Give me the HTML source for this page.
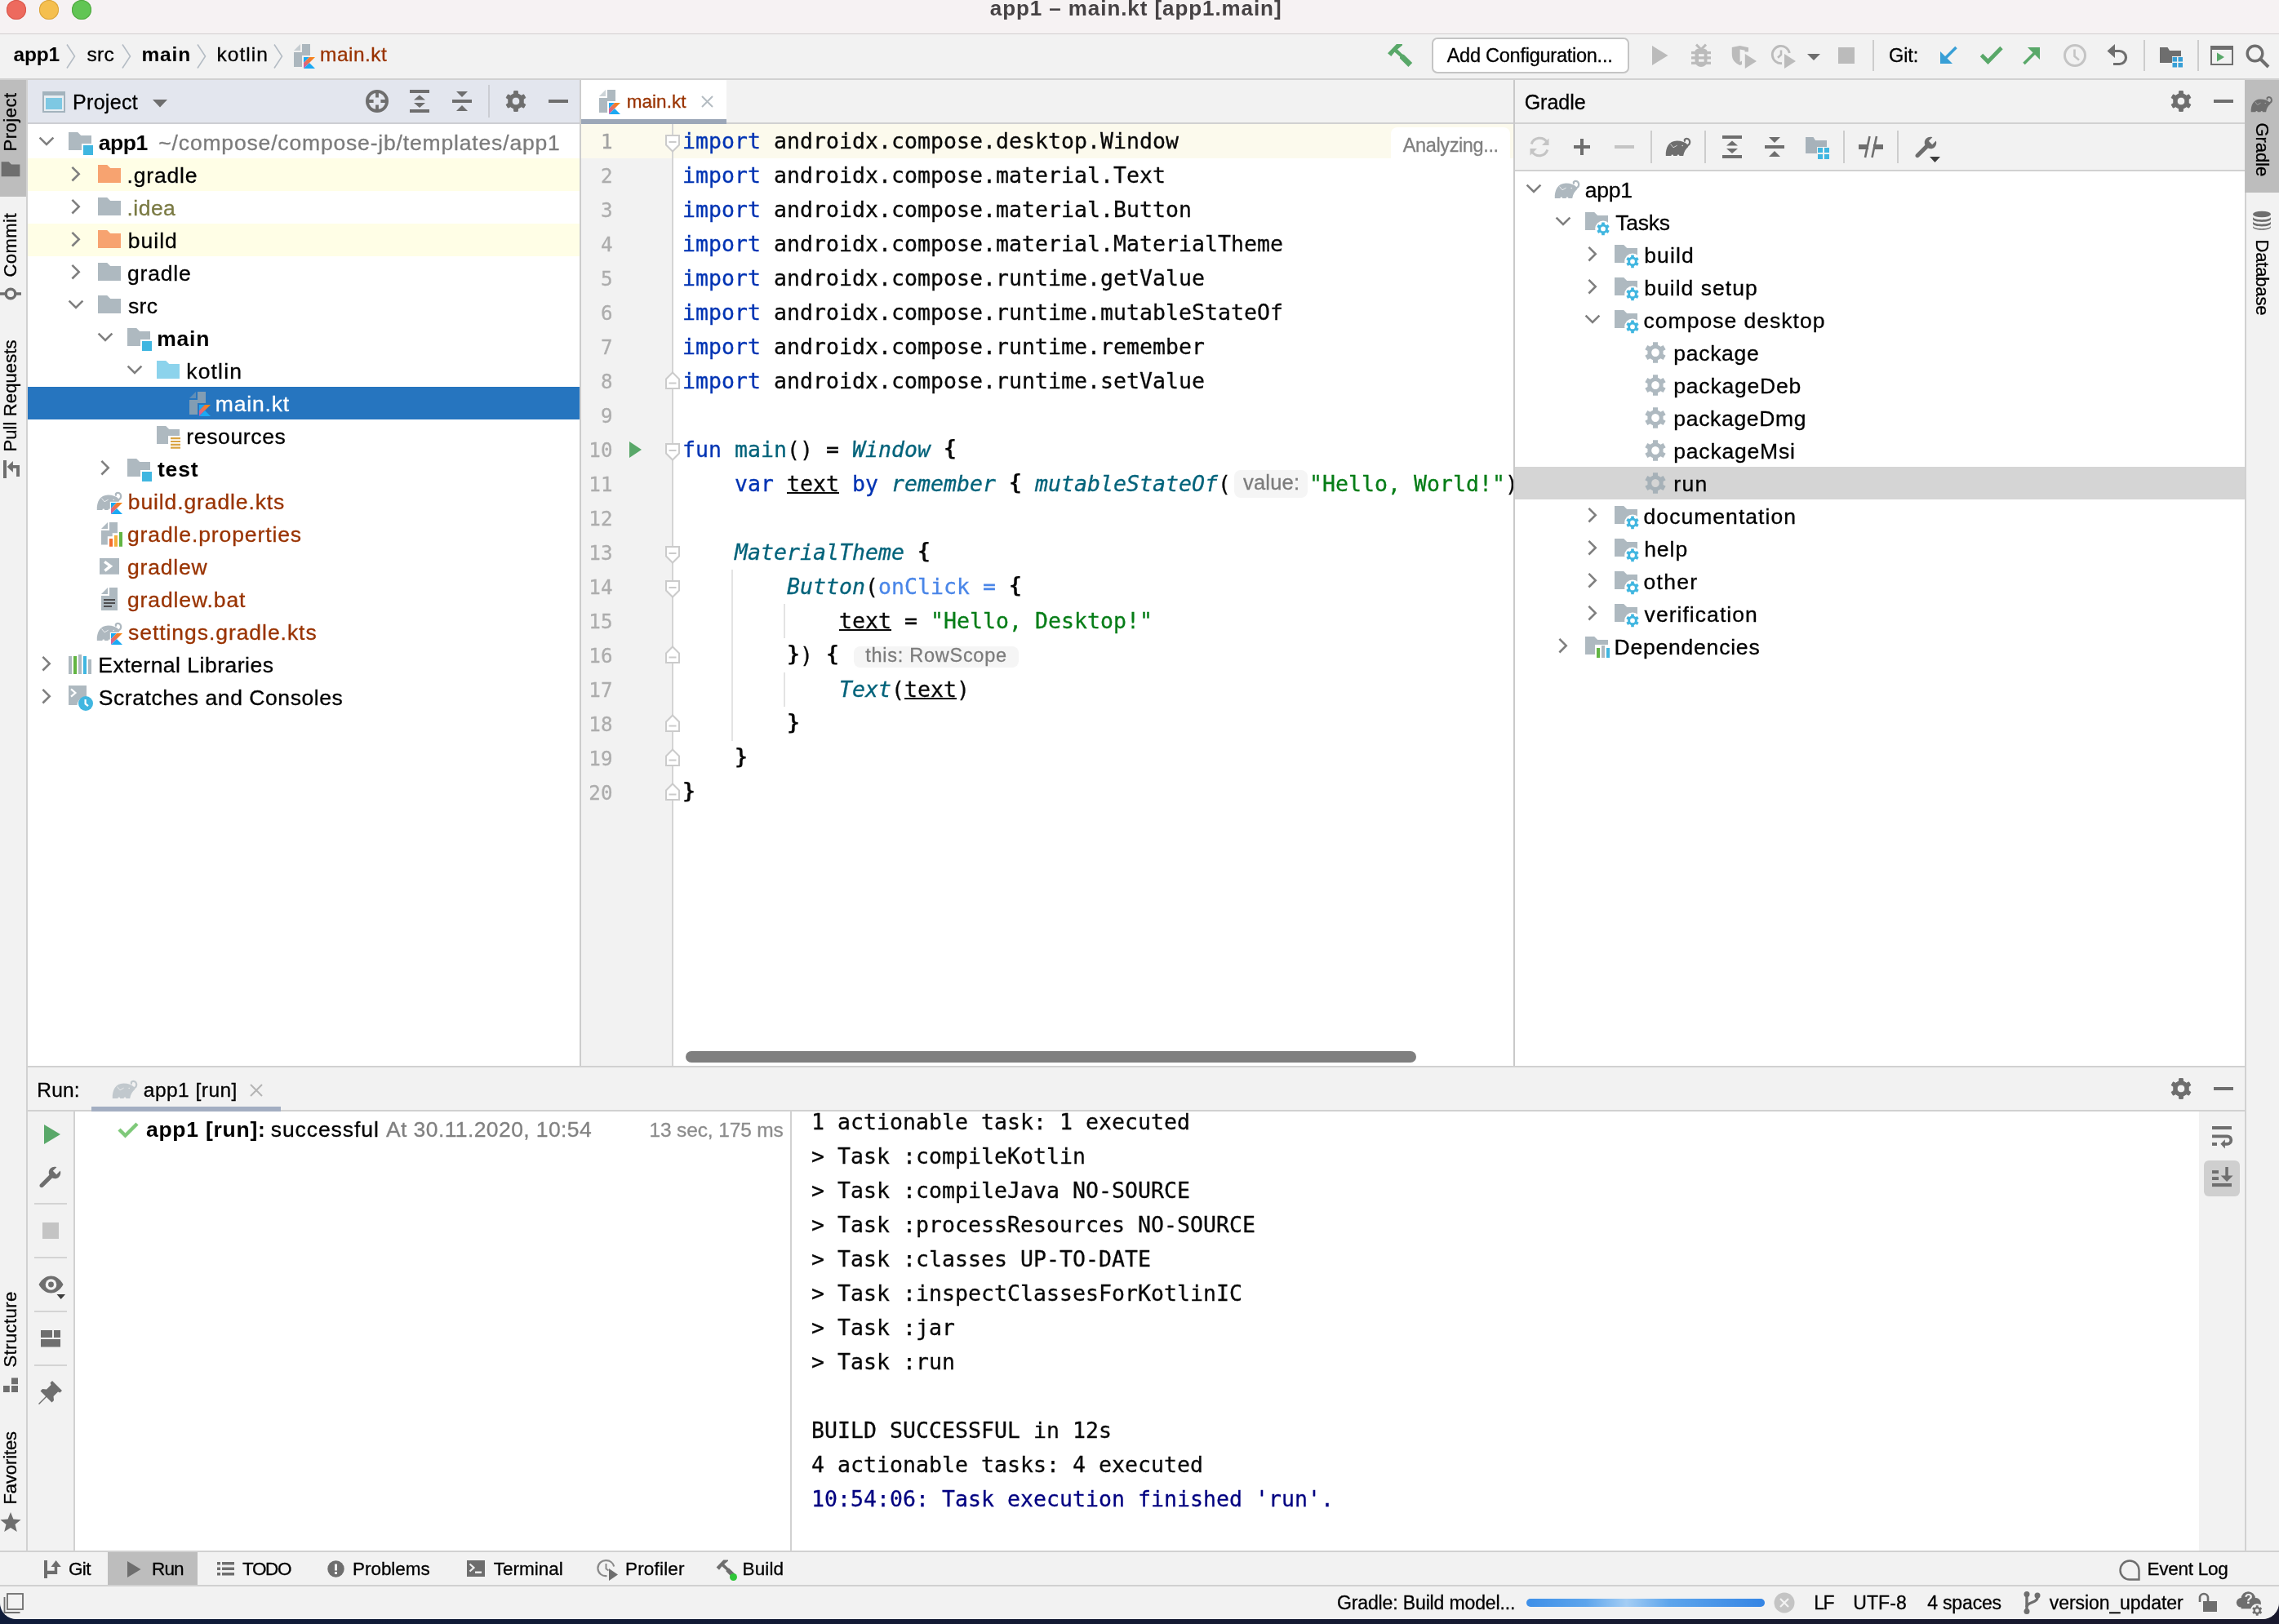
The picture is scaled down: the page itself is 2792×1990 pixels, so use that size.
<!DOCTYPE html>
<html lang="en"><head><meta charset="utf-8"><title>app1 – main.kt [app1.main]</title><style>
html,body{margin:0;padding:0;}
body{width:2792px;height:1990px;overflow:hidden;background:#131c33;position:relative;}
#root{position:absolute;left:0;top:0;width:2792px;height:1990px;overflow:hidden;will-change:transform;}
#root div,#root svg,#root span.t{position:absolute;}
span.t{white-space:pre;line-height:0;display:block;-webkit-text-stroke:0.3px;}
svg{overflow:visible;}
</style></head><body><div id="root">
<div style="left:0px;top:0px;width:2792px;height:1990px;background:#131c33;background:linear-gradient(90deg,#0f1c3a 0%,#141a33 50%,#19192d 100%);"></div>
<div class="win" style="left:0px;top:0px;width:2792px;height:1984px;background:#f2f2f2;border-radius:0 0 20px 20px;overflow:hidden;">
</div>
<div style="left:0px;top:0px;width:2792px;height:41px;background:#f6f2f3;"></div>
<div style="left:0px;top:41px;width:2792px;height:1px;background:#d2cfd0;"></div>
<div style="left:8px;top:0px;width:24px;height:24px;background:#ed6a5e;border-radius:12px;box-shadow:inset 0 0 0 1px #d8574c;"></div>
<div style="left:48px;top:0px;width:24px;height:24px;background:#f5bf4f;border-radius:12px;box-shadow:inset 0 0 0 1px #d9a33c;"></div>
<div style="left:88px;top:0px;width:24px;height:24px;background:#61c554;border-radius:12px;box-shadow:inset 0 0 0 1px #4fa73f;"></div>
<span id="t1" class="t" style="left:1212.80px;top:10.00px;font-family:'Liberation Sans', Arial, sans-serif;font-size:26px;color:#464244;letter-spacing:0.920px;font-weight:700;-webkit-text-stroke:0;">app1 – main.kt [app1.main]</span>
<div style="left:0px;top:42px;width:2792px;height:54px;background:#f2f2f2;"></div>
<div style="left:0px;top:96px;width:2792px;height:2px;background:#d1d1d1;"></div>
<span id="t2" class="t" style="left:16.50px;top:66.50px;font-family:'Liberation Sans', Arial, sans-serif;font-size:24.5px;color:#000;letter-spacing:-0.186px;font-weight:700;-webkit-text-stroke:0;">app1</span>
<svg style="left:81px;top:54px;" width="12" height="30" viewBox="0 0 12 30"><path d="M1 0.5L10.5 15L1 29.5" stroke="#b4bcc4" stroke-width="1.6" fill="none"/></svg>
<span id="t3" class="t" style="left:106.40px;top:66.50px;font-family:'Liberation Sans', Arial, sans-serif;font-size:24.5px;color:#000;letter-spacing:0.396px;">src</span>
<svg style="left:149px;top:54px;" width="12" height="30" viewBox="0 0 12 30"><path d="M1 0.5L10.5 15L1 29.5" stroke="#b4bcc4" stroke-width="1.6" fill="none"/></svg>
<span id="t4" class="t" style="left:173.40px;top:66.50px;font-family:'Liberation Sans', Arial, sans-serif;font-size:24.5px;color:#000;letter-spacing:0.861px;font-weight:700;-webkit-text-stroke:0;">main</span>
<svg style="left:241px;top:54px;" width="12" height="30" viewBox="0 0 12 30"><path d="M1 0.5L10.5 15L1 29.5" stroke="#b4bcc4" stroke-width="1.6" fill="none"/></svg>
<span id="t5" class="t" style="left:265.60px;top:66.50px;font-family:'Liberation Sans', Arial, sans-serif;font-size:24.5px;color:#000;letter-spacing:1.026px;">kotlin</span>
<svg style="left:335px;top:54px;" width="12" height="30" viewBox="0 0 12 30"><path d="M1 0.5L10.5 15L1 29.5" stroke="#b4bcc4" stroke-width="1.6" fill="none"/></svg>
<svg style="left:356px;top:52px;" width="32" height="32" viewBox="0 0 16 16"><path d="M6 1L2 5H6Z" fill="#9aa7b0" fill-opacity=".5"/><path d="M7 1H12V8H7V15H2V6H7Z" fill="#9aa7b0" fill-opacity=".8"/><defs><linearGradient id="kg1" x1="1" y1="0" x2="0" y2="1"><stop offset="0" stop-color="#f88909"/><stop offset=".4" stop-color="#f2783b"/><stop offset="1" stop-color="#c757bc"/></linearGradient></defs><path d="M8 9H11.5L8 12.5Z" fill="#1ba9f3"/><path d="M11.5 9H15L8 16V12.5Z" fill="url(#kg1)"/><path d="M8 16L11.5 12.5L15 16Z" fill="#1ba9f3"/></svg>
<span id="t6" class="t" style="left:392.00px;top:66.50px;font-family:'Liberation Sans', Arial, sans-serif;font-size:24.5px;color:#993300;letter-spacing:0.473px;">main.kt</span>
<svg style="left:1698px;top:52px;" width="34" height="32" viewBox="0 0 34 32"><path d="M2 13.2L12.9 2H20V3.5L14 8.5L19.9 14.2L22 15.1L32.2 25.100L27.400 30L16.900 19.400L17.200 17.500L10.500 11.700L6.300 17.100Z" fill="#59a869"/></svg>
<div style="left:1754px;top:46px;width:242px;height:44px;background:#fff;border:2px solid #c4c4c4;border-radius:7px;box-sizing:border-box;"></div>
<span id="t7" class="t" style="left:1772.70px;top:68.00px;font-family:'Liberation Sans', Arial, sans-serif;font-size:23.5px;color:#000;letter-spacing:-0.247px;">Add Configuration...</span>
<svg style="left:2024px;top:56px;" width="20" height="24" viewBox="0 0 20 24"><path d="M0 0L19.500 12L0 24Z" fill="#bbbbbb"/></svg>
<svg style="left:2068px;top:52px;" width="32" height="32" viewBox="0 0 32 32"><g fill="#bbbbbb"><path d="M8.500 11C8.500 8.300 12 7.600 16 7.600S23.500 8.300 23.500 11V22C23.500 27 20 30 16 30S8.500 27 8.500 22Z"/><rect x="4" y="11" width="24" height="3.200"/><rect x="4" y="17.200" width="24" height="3.300"/><rect x="4" y="23.700" width="24" height="3.200"/></g><path d="M10 2.600L16 8.600L22 2.600" stroke="#bbbbbb" stroke-width="3" fill="none"/><rect x="13" y="14.200" width="6.600" height="3" fill="#f2f2f2"/><rect x="13" y="20.500" width="6.600" height="3.200" fill="#f2f2f2"/></svg>
<svg style="left:2119px;top:52px;" width="34" height="34" viewBox="0 0 34 34"><path d="M2.800 6L12.600 4L23 6.300V11.600H18.600V9.800L12.600 8.600V24L15 22.500V27L12.600 28C6 25 2.800 21 2.800 14Z" fill="#bbbbbb"/><path d="M18.800 14L33 23L18.800 32Z" fill="#bbbbbb"/></svg>
<svg style="left:2168px;top:52px;" width="34" height="34" viewBox="0 0 34 34"><path d="M24.300 13A10.600 10.600 0 1 0 15 25.500" stroke="#bbbbbb" stroke-width="2.800" fill="none"/><path d="M14 9.500V15L10 18.800" stroke="#bbbbbb" stroke-width="2.600" fill="none"/><path d="M18 14L32 23L18 32Z" fill="#bbbbbb"/></svg>
<svg style="left:2214px;top:66px;" width="16" height="8" viewBox="0 0 16 8"><path d="M0 0H16L8 8Z" fill="#6e6e6e"/></svg>
<div style="left:2252px;top:58px;width:20px;height:20px;background:#bbbbbb;"></div>
<div style="left:2294px;top:49px;width:2px;height:38px;background:#cdcdcd;"></div>
<span id="t8" class="t" style="left:2314.00px;top:68.00px;font-family:'Liberation Sans', Arial, sans-serif;font-size:23.5px;color:#000;letter-spacing:-0.110px;">Git:</span>
<svg style="left:2374px;top:55px;" width="26" height="26" viewBox="0 0 26 26"><path d="M22.5 3L5.5 20" stroke="#389fd6" stroke-width="3.6" fill="none"/><path d="M3 8V23H18Z" fill="#389fd6"/></svg>
<svg style="left:2424px;top:54px;" width="32" height="28" viewBox="0 0 32 28"><path d="M3.500 13.500L11.500 21.500L28 4.500" stroke="#59a869" stroke-width="4.800" fill="none"/></svg>
<svg style="left:2476px;top:55px;" width="26" height="26" viewBox="0 0 26 26"><path d="M3.5 23L20.5 6" stroke="#59a869" stroke-width="3.6" fill="none"/><path d="M8 3H23V18Z" fill="#59a869"/></svg>
<svg style="left:2526px;top:52px;" width="32" height="32" viewBox="0 0 32 32"><circle cx="16" cy="16" r="12.5" stroke="#c4c4c4" stroke-width="3" fill="none"/><path d="M15.5 8.5V17L21 21.5" stroke="#c4c4c4" stroke-width="2.6" fill="none"/></svg>
<svg style="left:2580px;top:53px;" width="30" height="28" viewBox="0 0 30 28"><path d="M3 9.5H16.5A8 8 0 0 1 16.5 25.5H9" stroke="#6e6e6e" stroke-width="3.2" fill="none"/><path d="M11 1V18L1.5 9.5Z" fill="#6e6e6e"/></svg>
<div style="left:2626px;top:49px;width:2px;height:38px;background:#cdcdcd;"></div>
<svg style="left:2644px;top:54px;" width="32" height="30" viewBox="0 0 32 30"><path d="M2 4H11.5L14 8H28V15H17V23H2Z" fill="#6e6e6e"/><rect x="17.5" y="16" width="5.5" height="5.5" fill="#389fd6"/><rect x="24.5" y="16" width="5.5" height="5.5" fill="#389fd6"/><rect x="17.5" y="23" width="5.5" height="5.5" fill="#389fd6"/><rect x="24.5" y="23" width="5.5" height="5.5" fill="#389fd6"/></svg>
<div style="left:2692px;top:49px;width:2px;height:38px;background:#cdcdcd;"></div>
<svg style="left:2708px;top:56px;" width="28" height="24" viewBox="0 0 28 24"><rect x="1" y="3" width="26" height="20" stroke="#6e6e6e" stroke-width="2" fill="none"/><rect x="0" y="0" width="28" height="5" fill="#6e6e6e"/><path d="M8 8.5L17 14L8 19.5Z" fill="#59a869"/></svg>
<svg style="left:2750px;top:53px;" width="32" height="32" viewBox="0 0 32 32"><circle cx="12.5" cy="12.5" r="9.3" stroke="#6e6e6e" stroke-width="3.4" fill="none"/><path d="M19 19L29 29" stroke="#6e6e6e" stroke-width="4" fill="none"/></svg>
<div style="left:0px;top:98px;width:32px;height:1804px;background:#f2f2f2;"></div>
<div style="left:32px;top:98px;width:2px;height:1804px;background:#d1d1d1;"></div>
<div style="left:0px;top:98px;width:32px;height:143px;background:#bdbdbd;"></div>
<span id="t9" class="t" style="left:19.20px;top:177.00px;font-family:'Liberation Sans', Arial, sans-serif;font-size:22px;color:#000;letter-spacing:0.524px;transform-origin:1.00px 7.50px;transform:rotate(-90deg);">Project</span>
<svg style="left:0px;top:194.6px;" width="26" height="26" viewBox="0 0 16 16"><path d="M1 2H6.6L8.6 4H15V13H1Z" fill="#6e6e6e" fill-opacity="1"/></svg>
<span id="t10" class="t" style="left:19.20px;top:330.70px;font-family:'Liberation Sans', Arial, sans-serif;font-size:22px;color:#000;letter-spacing:0.447px;transform-origin:1.00px 7.50px;transform:rotate(-90deg);">Commit</span>
<svg style="left:0px;top:346.6px;" width="26" height="26" viewBox="0 0 26 26"><circle cx="13" cy="13" r="5.800" stroke="#6e6e6e" stroke-width="3.400" fill="none"/><path d="M0 13H7.500M18.500 13H26" stroke="#6e6e6e" stroke-width="3.400"/></svg>
<span id="t11" class="t" style="left:19.00px;top:545.10px;font-family:'Liberation Sans', Arial, sans-serif;font-size:22px;color:#000;letter-spacing:0.105px;transform-origin:1.00px 7.50px;transform:rotate(-90deg);">Pull Requests</span>
<svg style="left:0px;top:560px;" width="28" height="28" viewBox="0 0 28 28"><rect x="4" y="4" width="4" height="22" fill="#6e6e6e"/><path d="M8.700 12L15.900 5.100V10.100H24V24H20.100V13.800H15.900V18.800Z" fill="#6e6e6e"/></svg>
<span id="t12" class="t" style="left:19.20px;top:1666.60px;font-family:'Liberation Sans', Arial, sans-serif;font-size:22px;color:#000;letter-spacing:0.435px;transform-origin:1.00px 7.50px;transform:rotate(-90deg);">Structure</span>
<svg style="left:0px;top:1684px;" width="26" height="26" viewBox="0 0 26 26"><rect x="14" y="4.400" width="8" height="7.800" fill="#6e6e6e"/><rect x="4" y="14" width="7.800" height="8" fill="#6e6e6e"/><rect x="14" y="14" width="8" height="8" fill="#6e6e6e"/></svg>
<span id="t13" class="t" style="left:19.20px;top:1835.00px;font-family:'Liberation Sans', Arial, sans-serif;font-size:22px;color:#000;letter-spacing:-0.121px;transform-origin:1.00px 7.50px;transform:rotate(-90deg);">Favorites</span>
<svg style="left:0px;top:1852px;" width="26" height="26" viewBox="0 0 26 26"><path d="M13 1L16.400 9.600L25.600 10.200L18.500 16.100L20.800 25L13 20.100L5.200 25L7.500 16.100L0.400 10.200L9.600 9.600Z" fill="#6e6e6e"/></svg>
<div style="left:34px;top:98px;width:676px;height:52px;background:#e3e6ee;"></div>
<div style="left:34px;top:150px;width:676px;height:2px;background:#cdced3;"></div>
<div style="left:34px;top:152px;width:676px;height:1154px;background:#fff;"></div>
<div style="left:710px;top:98px;width:2px;height:1208px;background:#cdcdcd;"></div>
<svg style="left:52px;top:112px;" width="28" height="26" viewBox="0 0 28 26"><rect x="0" y="0" width="28" height="26" fill="#a3b3bd"/><rect x="2" y="5" width="24" height="19" fill="#e8eef2"/><rect x="4" y="8" width="20" height="14" fill="#7ec8e3"/></svg>
<span id="t14" class="t" style="left:89.10px;top:125.00px;font-family:'Liberation Sans', Arial, sans-serif;font-size:25px;color:#000;letter-spacing:0.290px;">Project</span>
<svg style="left:187px;top:122px;" width="18" height="10" viewBox="0 0 18 10"><path d="M0 0H18L9 9.5Z" fill="#6e6e6e"/></svg>
<svg style="left:446px;top:108px;" width="32" height="32" viewBox="0 0 16 16"><circle cx="8" cy="8" r="6.05" stroke="#6e6e6e" stroke-width="1.9" fill="none"/><path d="M8 1.5V5.8M8 10.2V14.5M1.5 8H5.8M10.2 8H14.5" stroke="#6e6e6e" stroke-width="1.9" fill="none"/></svg>
<svg style="left:498px;top:108px;" width="32" height="32" viewBox="0 0 16 16"><rect x="2" y="1" width="12" height="2" fill="#6e6e6e"/><rect x="2" y="13" width="12" height="2" fill="#6e6e6e"/><path d="M8 4.2L11.5 7.2H4.5Z" fill="#6e6e6e"/><path d="M8 12L11.5 9H4.5Z" fill="#6e6e6e"/></svg>
<svg style="left:550px;top:108px;" width="32" height="32" viewBox="0 0 16 16"><rect x="2" y="7" width="12" height="2" fill="#6e6e6e"/><path d="M8 5.5L11.5 2H4.5Z" fill="#6e6e6e"/><path d="M8 10.5L11.5 14H4.5Z" fill="#6e6e6e"/></svg>
<div style="left:598px;top:104px;width:2px;height:40px;background:#cbcdd3;"></div>
<svg style="left:616px;top:108px;" width="32" height="32" viewBox="0 0 16 16"><path d="M6.88 1.80L9.12 1.80L9.28 3.42L11.32 4.61L12.81 3.93L13.93 5.87L12.60 6.82L12.60 9.18L13.93 10.13L12.81 12.07L11.32 11.39L9.28 12.58L9.12 14.20L6.88 14.20L6.72 12.58L4.68 11.39L3.19 12.07L2.07 10.13L3.40 9.18L3.40 6.82L2.07 5.87L3.19 3.93L4.68 4.61L6.72 3.42ZM5.55 8a2.45 2.45 0 1 0 4.9 0a2.45 2.45 0 1 0 -4.9 0Z" fill="#6e6e6e" fill-rule="evenodd" stroke="#6e6e6e" stroke-width=".5" stroke-linejoin="round"/></svg>
<svg style="left:668px;top:108px;" width="32" height="32" viewBox="0 0 16 16"><rect x="2" y="7" width="12" height="2" fill="#6e6e6e"/></svg>
<svg style="left:41px;top:158px;" width="32" height="32" viewBox="0 0 16 16"><path d="M3.8 5.3L8 9.5L12.2 5.3" stroke="#7f7f7f" stroke-width="1.3" fill="none"/></svg>
<svg style="left:82px;top:158px;" width="32" height="32" viewBox="0 0 16 16"><path d="M1 2H6.6L8.6 4H15V9H9V13H1Z" fill="#9aa7b0" fill-opacity=".8"/><rect x="10" y="10" width="6" height="6" fill="#40b6e0"/></svg>
<span id="t15" class="t" style="left:120.80px;top:175.00px;font-family:'Liberation Sans', Arial, sans-serif;font-size:26.5px;color:#000;letter-spacing:-0.471px;font-weight:700;-webkit-text-stroke:0;">app1</span>
<span id="t16" class="t" style="left:194.30px;top:175.00px;font-family:'Liberation Sans', Arial, sans-serif;font-size:26.5px;color:#7b7b7b;letter-spacing:0.831px;">~/compose/compose-jb/templates/app1</span>
<div style="left:34px;top:194px;width:676px;height:40px;background:#fffee6;"></div>
<svg style="left:77px;top:198px;" width="32" height="32" viewBox="0 0 16 16"><path d="M5.7 3.45L9.85 7.6L5.7 11.75" stroke="#7f7f7f" stroke-width="1.3" fill="none"/></svg>
<svg style="left:118px;top:198px;" width="32" height="32" viewBox="0 0 16 16"><path d="M1 2H6.6L8.6 4H15V13H1Z" fill="#f26522" fill-opacity="0.6"/></svg>
<span id="t17" class="t" style="left:155.50px;top:215.00px;font-family:'Liberation Sans', Arial, sans-serif;font-size:26.5px;color:#000;letter-spacing:0.819px;">.gradle</span>
<svg style="left:77px;top:238px;" width="32" height="32" viewBox="0 0 16 16"><path d="M5.7 3.45L9.85 7.6L5.7 11.75" stroke="#7f7f7f" stroke-width="1.3" fill="none"/></svg>
<svg style="left:118px;top:238px;" width="32" height="32" viewBox="0 0 16 16"><path d="M1 2H6.6L8.6 4H15V13H1Z" fill="#9aa7b0" fill-opacity="0.8"/></svg>
<span id="t18" class="t" style="left:155.50px;top:255.00px;font-family:'Liberation Sans', Arial, sans-serif;font-size:26.5px;color:#7a7a43;letter-spacing:0.468px;">.idea</span>
<div style="left:34px;top:274px;width:676px;height:40px;background:#fffee6;"></div>
<svg style="left:77px;top:278px;" width="32" height="32" viewBox="0 0 16 16"><path d="M5.7 3.45L9.85 7.6L5.7 11.75" stroke="#7f7f7f" stroke-width="1.3" fill="none"/></svg>
<svg style="left:118px;top:278px;" width="32" height="32" viewBox="0 0 16 16"><path d="M1 2H6.6L8.6 4H15V13H1Z" fill="#f26522" fill-opacity="0.6"/></svg>
<span id="t19" class="t" style="left:156.80px;top:295.00px;font-family:'Liberation Sans', Arial, sans-serif;font-size:26.5px;color:#000;letter-spacing:1.012px;">build</span>
<svg style="left:77px;top:318px;" width="32" height="32" viewBox="0 0 16 16"><path d="M5.7 3.45L9.85 7.6L5.7 11.75" stroke="#7f7f7f" stroke-width="1.3" fill="none"/></svg>
<svg style="left:118px;top:318px;" width="32" height="32" viewBox="0 0 16 16"><path d="M1 2H6.6L8.6 4H15V13H1Z" fill="#9aa7b0" fill-opacity="0.8"/></svg>
<span id="t20" class="t" style="left:156.00px;top:335.00px;font-family:'Liberation Sans', Arial, sans-serif;font-size:26.5px;color:#000;letter-spacing:0.815px;">gradle</span>
<svg style="left:77px;top:358px;" width="32" height="32" viewBox="0 0 16 16"><path d="M3.8 5.3L8 9.5L12.2 5.3" stroke="#7f7f7f" stroke-width="1.3" fill="none"/></svg>
<svg style="left:118px;top:358px;" width="32" height="32" viewBox="0 0 16 16"><path d="M1 2H6.6L8.6 4H15V13H1Z" fill="#9aa7b0" fill-opacity="0.8"/></svg>
<span id="t21" class="t" style="left:157.00px;top:375.00px;font-family:'Liberation Sans', Arial, sans-serif;font-size:26.5px;color:#000;letter-spacing:0.313px;">src</span>
<svg style="left:113px;top:398px;" width="32" height="32" viewBox="0 0 16 16"><path d="M3.8 5.3L8 9.5L12.2 5.3" stroke="#7f7f7f" stroke-width="1.3" fill="none"/></svg>
<svg style="left:154px;top:398px;" width="32" height="32" viewBox="0 0 16 16"><path d="M1 2H6.6L8.6 4H15V9H9V13H1Z" fill="#9aa7b0" fill-opacity=".8"/><rect x="10" y="10" width="6" height="6" fill="#40b6e0"/></svg>
<span id="t22" class="t" style="left:192.20px;top:415.00px;font-family:'Liberation Sans', Arial, sans-serif;font-size:26.5px;color:#000;letter-spacing:0.779px;font-weight:700;-webkit-text-stroke:0;">main</span>
<svg style="left:149px;top:438px;" width="32" height="32" viewBox="0 0 16 16"><path d="M3.8 5.3L8 9.5L12.2 5.3" stroke="#7f7f7f" stroke-width="1.3" fill="none"/></svg>
<svg style="left:190px;top:438px;" width="32" height="32" viewBox="0 0 16 16"><path d="M1 2H6.6L8.6 4H15V13H1Z" fill="#40b6e0" fill-opacity="0.6"/></svg>
<span id="t23" class="t" style="left:228.30px;top:455.00px;font-family:'Liberation Sans', Arial, sans-serif;font-size:26.5px;color:#000;letter-spacing:1.155px;">kotlin</span>
<div style="left:34px;top:474px;width:676px;height:40px;background:#2675bf;"></div>
<svg style="left:228px;top:478px;" width="32" height="32" viewBox="0 0 16 16"><path d="M6 1L2 5H6Z" fill="#9aa7b0" fill-opacity=".5"/><path d="M7 1H12V8H7V15H2V6H7Z" fill="#9aa7b0" fill-opacity=".8"/><defs><linearGradient id="kg2" x1="1" y1="0" x2="0" y2="1"><stop offset="0" stop-color="#f88909"/><stop offset=".4" stop-color="#f2783b"/><stop offset="1" stop-color="#c757bc"/></linearGradient></defs><path d="M8 9H11.5L8 12.5Z" fill="#1ba9f3"/><path d="M11.5 9H15L8 16V12.5Z" fill="url(#kg2)"/><path d="M8 16L11.5 12.5L15 16Z" fill="#1ba9f3"/></svg>
<span id="t24" class="t" style="left:263.80px;top:495.00px;font-family:'Liberation Sans', Arial, sans-serif;font-size:26.5px;color:#fff;letter-spacing:0.808px;">main.kt</span>
<svg style="left:190px;top:518px;" width="32" height="32" viewBox="0 0 16 16"><path d="M1 2H6.6L8.6 4H15V8H8V13H1Z" fill="#9aa7b0" fill-opacity=".8"/><path d="M9.5 9.6h6M9.5 11.5h6M9.5 13.4h6M9.5 15.3h6" stroke="#d9a343" stroke-width="1.1" fill="none"/></svg>
<span id="t25" class="t" style="left:228.30px;top:535.00px;font-family:'Liberation Sans', Arial, sans-serif;font-size:26.5px;color:#000;letter-spacing:0.650px;">resources</span>
<svg style="left:113px;top:558px;" width="32" height="32" viewBox="0 0 16 16"><path d="M5.7 3.45L9.85 7.6L5.7 11.75" stroke="#7f7f7f" stroke-width="1.3" fill="none"/></svg>
<svg style="left:154px;top:558px;" width="32" height="32" viewBox="0 0 16 16"><path d="M1 2H6.6L8.6 4H15V9H9V13H1Z" fill="#9aa7b0" fill-opacity=".8"/><rect x="10" y="10" width="6" height="6" fill="#40b6e0"/></svg>
<span id="t26" class="t" style="left:193.00px;top:575.00px;font-family:'Liberation Sans', Arial, sans-serif;font-size:26.5px;color:#000;letter-spacing:0.800px;font-weight:700;-webkit-text-stroke:0;">test</span>
<svg style="left:118px;top:598px;" width="32" height="32" viewBox="0 0 16 16"><g opacity="0.8"><path d="M0.4 13.5C0.2 8.6 2.2 4.3 7.2 4.3C10 4.3 12.2 5.2 13.6 6.5L14.2 7.9C12.6 9.2 11.5 11 11.1 13.5H8.7A0.7 0.7 0 0 0 7.3 13.5H5.1A0.7 0.7 0 0 0 3.7 13.5Z" fill="#9aa7b0"/><path d="M13.1 7.3C14.6 6.9 15.25 5.8 15.05 4.6C14.8 3.2 13.4 2.6 12.4 3.15C11.95 3.4 11.8 3.9 11.95 4.35" stroke="#9aa7b0" stroke-width="1.15" stroke-linecap="round" fill="none"/></g><path d="M3.3 6.3L5 8.4L7.3 7.1" stroke="#fff" stroke-opacity=".85" stroke-width=".45" fill="none"/><circle cx="10.6" cy="7.2" r=".38" fill="#fff" fill-opacity=".85"/><rect x="8.4" y="8.4" width="8" height="8" fill="#fff"/><defs><linearGradient id="kg3" x1="1" y1="0" x2="0" y2="1"><stop offset="0" stop-color="#f88909"/><stop offset=".4" stop-color="#f2783b"/><stop offset="1" stop-color="#c757bc"/></linearGradient></defs><path d="M9 9H12.5L9 12.5Z" fill="#1ba9f3"/><path d="M12.5 9H16L9 16V12.5Z" fill="url(#kg3)"/><path d="M9 16L12.5 12.5L16 16Z" fill="#1ba9f3"/></svg>
<span id="t27" class="t" style="left:156.80px;top:615.00px;font-family:'Liberation Sans', Arial, sans-serif;font-size:26.5px;color:#993300;letter-spacing:0.881px;">build.gradle.kts</span>
<svg style="left:118px;top:638px;" width="32" height="32" viewBox="0 0 16 16"><path d="M7 1L3 5H7Z" fill="#9aa7b0" fill-opacity=".8"/><path d="M8 1H13V7.6H9.85V9.65H6.9V14.8H3V6H8Z" fill="#9aa7b0" fill-opacity=".8"/><rect x="8" y="11" width="2" height="4.9" fill="#f26522" fill-opacity=".95"/><rect x="11" y="9" width="2" height="6.9" fill="#f4af3d"/><rect x="14" y="7" width="2" height="8.900" fill="#62b543"/></svg>
<span id="t28" class="t" style="left:156.00px;top:655.00px;font-family:'Liberation Sans', Arial, sans-serif;font-size:26.5px;color:#993300;letter-spacing:0.886px;">gradle.properties</span>
<svg style="left:118px;top:678px;" width="32" height="32" viewBox="0 0 16 16"><rect x="2" y="3" width="12" height="9.900" fill="#9aa7b0" fill-opacity=".8"/><path d="M5.050 5.150L8.750 7.850L5.200 10.700" stroke="#fff" stroke-width="1.700" fill="none"/></svg>
<span id="t29" class="t" style="left:156.00px;top:695.00px;font-family:'Liberation Sans', Arial, sans-serif;font-size:26.5px;color:#993300;letter-spacing:0.806px;">gradlew</span>
<svg style="left:118px;top:718px;" width="32" height="32" viewBox="0 0 16 16"><path d="M7 1L3 5H7Z" fill="#9aa7b0" fill-opacity=".8"/><path d="M8 1V6H3V15H13V1Z" fill="#9aa7b0" fill-opacity=".8"/><path d="M4.500 8.500H11.500M4.500 10.500H11.500M4.500 12.500H9.500" stroke="#231f20" stroke-opacity=".7" stroke-width="1" fill="none"/></svg>
<span id="t30" class="t" style="left:156.00px;top:735.00px;font-family:'Liberation Sans', Arial, sans-serif;font-size:26.5px;color:#993300;letter-spacing:0.882px;">gradlew.bat</span>
<svg style="left:118px;top:758px;" width="32" height="32" viewBox="0 0 16 16"><g opacity="0.8"><path d="M0.4 13.5C0.2 8.6 2.2 4.3 7.2 4.3C10 4.3 12.2 5.2 13.6 6.5L14.2 7.9C12.6 9.2 11.5 11 11.1 13.5H8.7A0.7 0.7 0 0 0 7.3 13.5H5.1A0.7 0.7 0 0 0 3.7 13.5Z" fill="#9aa7b0"/><path d="M13.1 7.3C14.6 6.9 15.25 5.8 15.05 4.6C14.8 3.2 13.4 2.6 12.4 3.15C11.95 3.4 11.8 3.9 11.95 4.35" stroke="#9aa7b0" stroke-width="1.15" stroke-linecap="round" fill="none"/></g><path d="M3.3 6.3L5 8.4L7.3 7.1" stroke="#fff" stroke-opacity=".85" stroke-width=".45" fill="none"/><circle cx="10.6" cy="7.2" r=".38" fill="#fff" fill-opacity=".85"/><rect x="8.4" y="8.4" width="8" height="8" fill="#fff"/><defs><linearGradient id="kg4" x1="1" y1="0" x2="0" y2="1"><stop offset="0" stop-color="#f88909"/><stop offset=".4" stop-color="#f2783b"/><stop offset="1" stop-color="#c757bc"/></linearGradient></defs><path d="M9 9H12.5L9 12.5Z" fill="#1ba9f3"/><path d="M12.5 9H16L9 16V12.5Z" fill="url(#kg4)"/><path d="M9 16L12.5 12.5L16 16Z" fill="#1ba9f3"/></svg>
<span id="t31" class="t" style="left:157.00px;top:775.00px;font-family:'Liberation Sans', Arial, sans-serif;font-size:26.5px;color:#993300;letter-spacing:0.948px;">settings.gradle.kts</span>
<svg style="left:41px;top:798px;" width="32" height="32" viewBox="0 0 16 16"><path d="M5.7 3.45L9.85 7.6L5.7 11.75" stroke="#7f7f7f" stroke-width="1.3" fill="none"/></svg>
<svg style="left:82px;top:798px;" width="32" height="32" viewBox="0 0 16 16"><rect x="1" y="3" width="2" height="11" fill="#9aa7b0" fill-opacity=".8"/><rect x="4" y="3" width="2" height="11" fill="#62b543"/><rect x="7" y="2" width="2" height="12" fill="#9aa7b0" fill-opacity=".8"/><rect x="10" y="3" width="2" height="11" fill="#40b6e0"/><rect x="13" y="5" width="2" height="9" fill="#9aa7b0" fill-opacity=".8"/></svg>
<span id="t32" class="t" style="left:120.30px;top:815.00px;font-family:'Liberation Sans', Arial, sans-serif;font-size:26.5px;color:#000;letter-spacing:0.497px;">External Libraries</span>
<svg style="left:41px;top:838px;" width="32" height="32" viewBox="0 0 16 16"><path d="M5.7 3.45L9.85 7.6L5.7 11.75" stroke="#7f7f7f" stroke-width="1.3" fill="none"/></svg>
<svg style="left:82px;top:838px;" width="32" height="32" viewBox="0 0 16 16"><path d="M1 1H12V8.2A5 5 0 0 0 6.3 13H1Z" fill="#9aa7b0" fill-opacity=".8"/><path d="M2.5 3.2L5.2 5.5L2.5 7.8" stroke="#fff" stroke-width="1.1" fill="none"/><circle cx="11.5" cy="12" r="4.5" fill="#40b6e0"/><path d="M11.3 9.5V12.2L13 13.6" stroke="#fff" stroke-width="1.1" fill="none"/></svg>
<span id="t33" class="t" style="left:120.80px;top:855.00px;font-family:'Liberation Sans', Arial, sans-serif;font-size:26.5px;color:#000;letter-spacing:0.557px;">Scratches and Consoles</span>
<div style="left:712px;top:98px;width:1142px;height:52px;background:#f2f2f2;"></div>
<div style="left:712px;top:150px;width:1142px;height:2px;background:#d1d1d1;"></div>
<div style="left:712px;top:98px;width:178px;height:48px;background:#fff;"></div>
<div style="left:712px;top:146px;width:178px;height:6px;background:#9ca7b8;"></div>
<svg style="left:730px;top:108px;" width="32" height="32" viewBox="0 0 16 16"><path d="M6 1L2 5H6Z" fill="#9aa7b0" fill-opacity=".5"/><path d="M7 1H12V8H7V15H2V6H7Z" fill="#9aa7b0" fill-opacity=".8"/><defs><linearGradient id="kg5" x1="1" y1="0" x2="0" y2="1"><stop offset="0" stop-color="#f88909"/><stop offset=".4" stop-color="#f2783b"/><stop offset="1" stop-color="#c757bc"/></linearGradient></defs><path d="M8 9H11.5L8 12.5Z" fill="#1ba9f3"/><path d="M11.5 9H15L8 16V12.5Z" fill="url(#kg5)"/><path d="M8 16L11.5 12.5L15 16Z" fill="#1ba9f3"/></svg>
<span id="t34" class="t" style="left:767.80px;top:124.50px;font-family:'Liberation Sans', Arial, sans-serif;font-size:22.5px;color:#993300;letter-spacing:0.022px;">main.kt</span>
<svg style="left:858.5px;top:116.5px;" width="15" height="15" viewBox="0 0 15 15"><path d="M1 1L14 14M14 1L1 14" stroke="#b4bcc2" stroke-width="2" fill="none"/></svg>
<div style="left:712px;top:152px;width:1142px;height:1154px;background:#fff;"></div>
<div style="left:712px;top:152px;width:111px;height:1154px;background:#f2f2f2;"></div>
<div style="left:712px;top:152px;width:1142px;height:42px;background:#fcfaed;"></div>
<div style="left:823px;top:152px;width:2px;height:1154px;background:#d4d4d4;"></div>
<span id="t35" class="t" style="left:836.00px;top:172.50px;font-family:'DejaVu Sans Mono', 'Liberation Mono', monospace;font-size:26.5px;color:#0033b3;letter-spacing:0.047px;">import</span>
<span id="t36" class="t" style="left:948.00px;top:172.50px;font-family:'DejaVu Sans Mono', 'Liberation Mono', monospace;font-size:26.5px;color:#080808;letter-spacing:0.047px;">androidx.compose.desktop.Window</span>
<span id="t37" class="t" style="left:836.00px;top:214.50px;font-family:'DejaVu Sans Mono', 'Liberation Mono', monospace;font-size:26.5px;color:#0033b3;letter-spacing:0.047px;">import</span>
<span id="t38" class="t" style="left:948.00px;top:214.50px;font-family:'DejaVu Sans Mono', 'Liberation Mono', monospace;font-size:26.5px;color:#080808;letter-spacing:0.047px;">androidx.compose.material.Text</span>
<span id="t39" class="t" style="left:836.00px;top:256.50px;font-family:'DejaVu Sans Mono', 'Liberation Mono', monospace;font-size:26.5px;color:#0033b3;letter-spacing:0.047px;">import</span>
<span id="t40" class="t" style="left:948.00px;top:256.50px;font-family:'DejaVu Sans Mono', 'Liberation Mono', monospace;font-size:26.5px;color:#080808;letter-spacing:0.047px;">androidx.compose.material.Button</span>
<span id="t41" class="t" style="left:836.00px;top:298.50px;font-family:'DejaVu Sans Mono', 'Liberation Mono', monospace;font-size:26.5px;color:#0033b3;letter-spacing:0.047px;">import</span>
<span id="t42" class="t" style="left:948.00px;top:298.50px;font-family:'DejaVu Sans Mono', 'Liberation Mono', monospace;font-size:26.5px;color:#080808;letter-spacing:0.047px;">androidx.compose.material.MaterialTheme</span>
<span id="t43" class="t" style="left:836.00px;top:340.50px;font-family:'DejaVu Sans Mono', 'Liberation Mono', monospace;font-size:26.5px;color:#0033b3;letter-spacing:0.047px;">import</span>
<span id="t44" class="t" style="left:948.00px;top:340.50px;font-family:'DejaVu Sans Mono', 'Liberation Mono', monospace;font-size:26.5px;color:#080808;letter-spacing:0.047px;">androidx.compose.runtime.getValue</span>
<span id="t45" class="t" style="left:836.00px;top:382.50px;font-family:'DejaVu Sans Mono', 'Liberation Mono', monospace;font-size:26.5px;color:#0033b3;letter-spacing:0.047px;">import</span>
<span id="t46" class="t" style="left:948.00px;top:382.50px;font-family:'DejaVu Sans Mono', 'Liberation Mono', monospace;font-size:26.5px;color:#080808;letter-spacing:0.047px;">androidx.compose.runtime.mutableStateOf</span>
<span id="t47" class="t" style="left:836.00px;top:424.50px;font-family:'DejaVu Sans Mono', 'Liberation Mono', monospace;font-size:26.5px;color:#0033b3;letter-spacing:0.047px;">import</span>
<span id="t48" class="t" style="left:948.00px;top:424.50px;font-family:'DejaVu Sans Mono', 'Liberation Mono', monospace;font-size:26.5px;color:#080808;letter-spacing:0.047px;">androidx.compose.runtime.remember</span>
<span id="t49" class="t" style="left:836.00px;top:466.50px;font-family:'DejaVu Sans Mono', 'Liberation Mono', monospace;font-size:26.5px;color:#0033b3;letter-spacing:0.047px;">import</span>
<span id="t50" class="t" style="left:948.00px;top:466.50px;font-family:'DejaVu Sans Mono', 'Liberation Mono', monospace;font-size:26.5px;color:#080808;letter-spacing:0.047px;">androidx.compose.runtime.setValue</span>
<span id="t51" class="t" style="left:836.00px;top:550.50px;font-family:'DejaVu Sans Mono', 'Liberation Mono', monospace;font-size:26.5px;color:#0033b3;letter-spacing:0.047px;">fun</span>
<span id="t52" class="t" style="left:900.00px;top:550.50px;font-family:'DejaVu Sans Mono', 'Liberation Mono', monospace;font-size:26.5px;color:#00627a;letter-spacing:0.047px;">main</span>
<span id="t53" class="t" style="left:964.00px;top:550.50px;font-family:'DejaVu Sans Mono', 'Liberation Mono', monospace;font-size:26.5px;color:#080808;letter-spacing:0.047px;">() =</span>
<span id="t54" class="t" style="left:1044.00px;top:550.50px;font-family:'DejaVu Sans Mono', 'Liberation Mono', monospace;font-size:26.5px;color:#00627a;font-style:italic;letter-spacing:0.047px;">Window</span>
<span id="t55" class="t" style="left:1156.00px;top:548.50px;font-family:'DejaVu Sans Mono', 'Liberation Mono', monospace;font-size:26.5px;color:#080808;font-weight:700;-webkit-text-stroke:0;letter-spacing:0.047px;">{</span>
<span id="t56" class="t" style="left:900.00px;top:592.50px;font-family:'DejaVu Sans Mono', 'Liberation Mono', monospace;font-size:26.5px;color:#0033b3;letter-spacing:0.047px;">var</span>
<span id="t57" class="t" style="left:964.00px;top:592.50px;font-family:'DejaVu Sans Mono', 'Liberation Mono', monospace;font-size:26.5px;color:#080808;letter-spacing:0.047px;text-decoration:underline;text-decoration-thickness:2px;text-underline-offset:1px;">text</span>
<span id="t58" class="t" style="left:1044.00px;top:592.50px;font-family:'DejaVu Sans Mono', 'Liberation Mono', monospace;font-size:26.5px;color:#0033b3;letter-spacing:0.047px;">by</span>
<span id="t59" class="t" style="left:1092.00px;top:592.50px;font-family:'DejaVu Sans Mono', 'Liberation Mono', monospace;font-size:26.5px;color:#00627a;font-style:italic;letter-spacing:0.047px;">remember</span>
<span id="t60" class="t" style="left:1236.00px;top:590.50px;font-family:'DejaVu Sans Mono', 'Liberation Mono', monospace;font-size:26.5px;color:#080808;font-weight:700;-webkit-text-stroke:0;letter-spacing:0.047px;">{</span>
<span id="t61" class="t" style="left:1268.00px;top:592.50px;font-family:'DejaVu Sans Mono', 'Liberation Mono', monospace;font-size:26.5px;color:#00627a;font-style:italic;letter-spacing:0.047px;">mutableStateOf</span>
<span id="t62" class="t" style="left:1492.00px;top:592.50px;font-family:'DejaVu Sans Mono', 'Liberation Mono', monospace;font-size:26.5px;color:#080808;letter-spacing:0.047px;">(</span>
<div style="left:1512.2px;top:576px;width:89.5px;height:34px;background:#f5f5f5;border-radius:8px;"></div>
<span id="t63" class="t" style="left:1523.00px;top:591.00px;font-family:'Liberation Sans', Arial, sans-serif;font-size:25.5px;color:#7c7c7c;letter-spacing:0.208px;">value:</span>
<span id="t64" class="t" style="left:1604.00px;top:592.50px;font-family:'DejaVu Sans Mono', 'Liberation Mono', monospace;font-size:26.5px;color:#067d17;letter-spacing:0.047px;">&quot;Hello, World!&quot;</span>
<span id="t65" class="t" style="left:1844.00px;top:592.50px;font-family:'DejaVu Sans Mono', 'Liberation Mono', monospace;font-size:26.5px;color:#080808;letter-spacing:0.047px;">)</span>
<span id="t66" class="t" style="left:900.00px;top:676.50px;font-family:'DejaVu Sans Mono', 'Liberation Mono', monospace;font-size:26.5px;color:#00627a;font-style:italic;letter-spacing:0.047px;">MaterialTheme</span>
<span id="t67" class="t" style="left:1124.00px;top:674.50px;font-family:'DejaVu Sans Mono', 'Liberation Mono', monospace;font-size:26.5px;color:#080808;font-weight:700;-webkit-text-stroke:0;letter-spacing:0.047px;">{</span>
<span id="t68" class="t" style="left:964.00px;top:718.50px;font-family:'DejaVu Sans Mono', 'Liberation Mono', monospace;font-size:26.5px;color:#00627a;font-style:italic;letter-spacing:0.047px;">Button</span>
<span id="t69" class="t" style="left:1060.00px;top:718.50px;font-family:'DejaVu Sans Mono', 'Liberation Mono', monospace;font-size:26.5px;color:#080808;letter-spacing:0.047px;">(</span>
<span id="t70" class="t" style="left:1076.00px;top:718.50px;font-family:'DejaVu Sans Mono', 'Liberation Mono', monospace;font-size:26.5px;color:#4a86e8;letter-spacing:0.047px;">onClick =</span>
<span id="t71" class="t" style="left:1236.00px;top:716.50px;font-family:'DejaVu Sans Mono', 'Liberation Mono', monospace;font-size:26.5px;color:#080808;font-weight:700;-webkit-text-stroke:0;letter-spacing:0.047px;">{</span>
<span id="t72" class="t" style="left:1028.00px;top:760.50px;font-family:'DejaVu Sans Mono', 'Liberation Mono', monospace;font-size:26.5px;color:#080808;letter-spacing:0.047px;text-decoration:underline;text-decoration-thickness:2px;text-underline-offset:1px;">text</span>
<span id="t73" class="t" style="left:1108.00px;top:760.50px;font-family:'DejaVu Sans Mono', 'Liberation Mono', monospace;font-size:26.5px;color:#080808;letter-spacing:0.047px;">=</span>
<span id="t74" class="t" style="left:1140.00px;top:760.50px;font-family:'DejaVu Sans Mono', 'Liberation Mono', monospace;font-size:26.5px;color:#067d17;letter-spacing:0.047px;">&quot;Hello, Desktop!&quot;</span>
<span id="t75" class="t" style="left:964.00px;top:800.50px;font-family:'DejaVu Sans Mono', 'Liberation Mono', monospace;font-size:26.5px;color:#080808;font-weight:700;-webkit-text-stroke:0;letter-spacing:0.047px;">}</span>
<span id="t76" class="t" style="left:980.00px;top:802.50px;font-family:'DejaVu Sans Mono', 'Liberation Mono', monospace;font-size:26.5px;color:#080808;letter-spacing:0.047px;">)</span>
<span id="t77" class="t" style="left:1012.00px;top:800.50px;font-family:'DejaVu Sans Mono', 'Liberation Mono', monospace;font-size:26.5px;color:#080808;font-weight:700;-webkit-text-stroke:0;letter-spacing:0.047px;">{</span>
<div style="left:1046.4px;top:792px;width:201.6px;height:26px;background:#f5f5f5;border-radius:8px;"></div>
<span id="t78" class="t" style="left:1060.20px;top:803.00px;font-family:'Liberation Sans', Arial, sans-serif;font-size:23.5px;color:#7c7c7c;letter-spacing:0.738px;">this: RowScope</span>
<span id="t79" class="t" style="left:1028.00px;top:844.50px;font-family:'DejaVu Sans Mono', 'Liberation Mono', monospace;font-size:26.5px;color:#00627a;font-style:italic;letter-spacing:0.047px;">Text</span>
<span id="t80" class="t" style="left:1092.00px;top:844.50px;font-family:'DejaVu Sans Mono', 'Liberation Mono', monospace;font-size:26.5px;color:#080808;letter-spacing:0.047px;">(</span>
<span id="t81" class="t" style="left:1108.00px;top:844.50px;font-family:'DejaVu Sans Mono', 'Liberation Mono', monospace;font-size:26.5px;color:#080808;letter-spacing:0.047px;text-decoration:underline;text-decoration-thickness:2px;text-underline-offset:1px;">text</span>
<span id="t82" class="t" style="left:1172.00px;top:844.50px;font-family:'DejaVu Sans Mono', 'Liberation Mono', monospace;font-size:26.5px;color:#080808;letter-spacing:0.047px;">)</span>
<span id="t83" class="t" style="left:964.00px;top:884.50px;font-family:'DejaVu Sans Mono', 'Liberation Mono', monospace;font-size:26.5px;color:#080808;font-weight:700;-webkit-text-stroke:0;letter-spacing:0.047px;">}</span>
<span id="t84" class="t" style="left:900.00px;top:926.50px;font-family:'DejaVu Sans Mono', 'Liberation Mono', monospace;font-size:26.5px;color:#080808;font-weight:700;-webkit-text-stroke:0;letter-spacing:0.047px;">}</span>
<span id="t85" class="t" style="left:836.00px;top:968.50px;font-family:'DejaVu Sans Mono', 'Liberation Mono', monospace;font-size:26.5px;color:#080808;font-weight:700;-webkit-text-stroke:0;letter-spacing:0.047px;">}</span>
<span id="t86" class="t" style="left:735.90px;top:174.00px;font-family:'DejaVu Sans Mono', 'Liberation Mono', monospace;font-size:24.2px;color:#a3a3a3;letter-spacing:0.032px;">1</span>
<span id="t87" class="t" style="left:735.90px;top:216.00px;font-family:'DejaVu Sans Mono', 'Liberation Mono', monospace;font-size:24.2px;color:#adadad;letter-spacing:0.032px;">2</span>
<span id="t88" class="t" style="left:735.90px;top:258.00px;font-family:'DejaVu Sans Mono', 'Liberation Mono', monospace;font-size:24.2px;color:#adadad;letter-spacing:0.032px;">3</span>
<span id="t89" class="t" style="left:735.90px;top:300.00px;font-family:'DejaVu Sans Mono', 'Liberation Mono', monospace;font-size:24.2px;color:#adadad;letter-spacing:0.032px;">4</span>
<span id="t90" class="t" style="left:735.90px;top:342.00px;font-family:'DejaVu Sans Mono', 'Liberation Mono', monospace;font-size:24.2px;color:#adadad;letter-spacing:0.032px;">5</span>
<span id="t91" class="t" style="left:735.90px;top:384.00px;font-family:'DejaVu Sans Mono', 'Liberation Mono', monospace;font-size:24.2px;color:#adadad;letter-spacing:0.032px;">6</span>
<span id="t92" class="t" style="left:735.90px;top:426.00px;font-family:'DejaVu Sans Mono', 'Liberation Mono', monospace;font-size:24.2px;color:#adadad;letter-spacing:0.032px;">7</span>
<span id="t93" class="t" style="left:735.90px;top:468.00px;font-family:'DejaVu Sans Mono', 'Liberation Mono', monospace;font-size:24.2px;color:#adadad;letter-spacing:0.032px;">8</span>
<span id="t94" class="t" style="left:735.90px;top:510.00px;font-family:'DejaVu Sans Mono', 'Liberation Mono', monospace;font-size:24.2px;color:#adadad;letter-spacing:0.032px;">9</span>
<span id="t95" class="t" style="left:721.30px;top:552.00px;font-family:'DejaVu Sans Mono', 'Liberation Mono', monospace;font-size:24.2px;color:#adadad;letter-spacing:0.032px;">10</span>
<span id="t96" class="t" style="left:721.30px;top:594.00px;font-family:'DejaVu Sans Mono', 'Liberation Mono', monospace;font-size:24.2px;color:#adadad;letter-spacing:0.032px;">11</span>
<span id="t97" class="t" style="left:721.30px;top:636.00px;font-family:'DejaVu Sans Mono', 'Liberation Mono', monospace;font-size:24.2px;color:#adadad;letter-spacing:0.032px;">12</span>
<span id="t98" class="t" style="left:721.30px;top:678.00px;font-family:'DejaVu Sans Mono', 'Liberation Mono', monospace;font-size:24.2px;color:#adadad;letter-spacing:0.032px;">13</span>
<span id="t99" class="t" style="left:721.30px;top:720.00px;font-family:'DejaVu Sans Mono', 'Liberation Mono', monospace;font-size:24.2px;color:#adadad;letter-spacing:0.032px;">14</span>
<span id="t100" class="t" style="left:721.30px;top:762.00px;font-family:'DejaVu Sans Mono', 'Liberation Mono', monospace;font-size:24.2px;color:#adadad;letter-spacing:0.032px;">15</span>
<span id="t101" class="t" style="left:721.30px;top:804.00px;font-family:'DejaVu Sans Mono', 'Liberation Mono', monospace;font-size:24.2px;color:#adadad;letter-spacing:0.032px;">16</span>
<span id="t102" class="t" style="left:721.30px;top:846.00px;font-family:'DejaVu Sans Mono', 'Liberation Mono', monospace;font-size:24.2px;color:#adadad;letter-spacing:0.032px;">17</span>
<span id="t103" class="t" style="left:721.30px;top:888.00px;font-family:'DejaVu Sans Mono', 'Liberation Mono', monospace;font-size:24.2px;color:#adadad;letter-spacing:0.032px;">18</span>
<span id="t104" class="t" style="left:721.30px;top:930.00px;font-family:'DejaVu Sans Mono', 'Liberation Mono', monospace;font-size:24.2px;color:#adadad;letter-spacing:0.032px;">19</span>
<span id="t105" class="t" style="left:721.30px;top:972.00px;font-family:'DejaVu Sans Mono', 'Liberation Mono', monospace;font-size:24.2px;color:#adadad;letter-spacing:0.032px;">20</span>
<svg style="left:815px;top:165px;" width="18" height="22" viewBox="0 0 18 22"><path d="M1 1H17V12.500L9 20.500L1 12.500Z" fill="#fff" stroke="#cbcbcb" stroke-width="2"/><path d="M4.500 9H13.500" stroke="#cbcbcb" stroke-width="2"/></svg>
<svg style="left:815px;top:455px;" width="18" height="22" viewBox="0 0 18 22"><path d="M1 21H17V9.500L9 1.500L1 9.500Z" fill="#fff" stroke="#cbcbcb" stroke-width="2"/><path d="M4.500 14.500H13.500" stroke="#cbcbcb" stroke-width="2"/></svg>
<svg style="left:815px;top:543px;" width="18" height="22" viewBox="0 0 18 22"><path d="M1 1H17V12.500L9 20.500L1 12.500Z" fill="#fff" stroke="#cbcbcb" stroke-width="2"/><path d="M4.500 9H13.500" stroke="#cbcbcb" stroke-width="2"/></svg>
<svg style="left:815px;top:669px;" width="18" height="22" viewBox="0 0 18 22"><path d="M1 1H17V12.500L9 20.500L1 12.500Z" fill="#fff" stroke="#cbcbcb" stroke-width="2"/><path d="M4.500 9H13.500" stroke="#cbcbcb" stroke-width="2"/></svg>
<svg style="left:815px;top:711px;" width="18" height="22" viewBox="0 0 18 22"><path d="M1 1H17V12.500L9 20.500L1 12.500Z" fill="#fff" stroke="#cbcbcb" stroke-width="2"/><path d="M4.500 9H13.500" stroke="#cbcbcb" stroke-width="2"/></svg>
<svg style="left:815px;top:791px;" width="18" height="22" viewBox="0 0 18 22"><path d="M1 21H17V9.500L9 1.500L1 9.500Z" fill="#fff" stroke="#cbcbcb" stroke-width="2"/><path d="M4.500 14.500H13.500" stroke="#cbcbcb" stroke-width="2"/></svg>
<svg style="left:815px;top:875px;" width="18" height="22" viewBox="0 0 18 22"><path d="M1 21H17V9.500L9 1.500L1 9.500Z" fill="#fff" stroke="#cbcbcb" stroke-width="2"/><path d="M4.500 14.500H13.500" stroke="#cbcbcb" stroke-width="2"/></svg>
<svg style="left:815px;top:917px;" width="18" height="22" viewBox="0 0 18 22"><path d="M1 21H17V9.500L9 1.500L1 9.500Z" fill="#fff" stroke="#cbcbcb" stroke-width="2"/><path d="M4.500 14.500H13.500" stroke="#cbcbcb" stroke-width="2"/></svg>
<svg style="left:815px;top:959px;" width="18" height="22" viewBox="0 0 18 22"><path d="M1 21H17V9.500L9 1.500L1 9.500Z" fill="#fff" stroke="#cbcbcb" stroke-width="2"/><path d="M4.500 14.500H13.500" stroke="#cbcbcb" stroke-width="2"/></svg>
<svg style="left:771px;top:541px;" width="16" height="20" viewBox="0 0 16 20"><path d="M0 0L15 10L0 20Z" fill="#59a869"/></svg>
<div style="left:896px;top:698px;width:2px;height:210px;background:#e3e3e3;"></div>
<div style="left:960px;top:740px;width:2px;height:42px;background:#e3e3e3;"></div>
<div style="left:960px;top:824px;width:2px;height:42px;background:#e3e3e3;"></div>
<div style="left:1704px;top:156px;width:146px;height:44px;background:#fff;border-radius:8px 8px 0 0;"></div>
<span id="t106" class="t" style="left:1718.70px;top:178.00px;font-family:'Liberation Sans', Arial, sans-serif;font-size:23.5px;color:#7f7f7f;letter-spacing:-0.368px;">Analyzing...</span>
<div style="left:840px;top:1288px;width:895px;height:14px;background:#7f7f7f;border-radius:7px;"></div>
<div style="left:1854px;top:98px;width:2px;height:1208px;background:#c9c9c9;"></div>
<div style="left:1856px;top:98px;width:894px;height:52px;background:#f2f2f2;"></div>
<div style="left:1856px;top:150px;width:894px;height:2px;background:#d1d1d1;"></div>
<div style="left:1856px;top:152px;width:894px;height:56px;background:#f2f2f2;"></div>
<div style="left:1856px;top:208px;width:894px;height:2px;background:#d1d1d1;"></div>
<div style="left:1856px;top:210px;width:894px;height:1096px;background:#fff;"></div>
<span id="t107" class="t" style="left:1867.70px;top:125.00px;font-family:'Liberation Sans', Arial, sans-serif;font-size:25px;color:#000;letter-spacing:-0.027px;">Gradle</span>
<svg style="left:2656px;top:108px;" width="32" height="32" viewBox="0 0 16 16"><path d="M6.88 1.80L9.12 1.80L9.28 3.42L11.32 4.61L12.81 3.93L13.93 5.87L12.60 6.82L12.60 9.18L13.93 10.13L12.81 12.07L11.32 11.39L9.28 12.58L9.12 14.20L6.88 14.20L6.72 12.58L4.68 11.39L3.19 12.07L2.07 10.13L3.40 9.18L3.40 6.82L2.07 5.87L3.19 3.93L4.68 4.61L6.72 3.42ZM5.55 8a2.45 2.45 0 1 0 4.9 0a2.45 2.45 0 1 0 -4.9 0Z" fill="#6e6e6e" fill-rule="evenodd" stroke="#6e6e6e" stroke-width=".5" stroke-linejoin="round"/></svg>
<svg style="left:2708px;top:108px;" width="32" height="32" viewBox="0 0 16 16"><rect x="2" y="7" width="12" height="2" fill="#6e6e6e"/></svg>
<svg style="left:1872px;top:166px;" width="28" height="28" viewBox="0 0 28 28"><g stroke="#c4c4c4" stroke-width="3" fill="none"><path d="M23 8A10.5 10.5 0 0 0 4.2 10.5"/><path d="M5 20A10.5 10.5 0 0 0 23.8 17.5"/></g><path d="M25.5 3.5V12H17Z" fill="#c4c4c4"/><path d="M2.5 24.5V16H11Z" fill="#c4c4c4"/></svg>
<svg style="left:1922px;top:164px;" width="32" height="32" viewBox="0 0 16 16"><path d="M7 3H9V7H13V9H9V13H7V9H3V7H7Z" fill="#6e6e6e"/></svg>
<svg style="left:1974px;top:164px;" width="32" height="32" viewBox="0 0 16 16"><rect x="2" y="7" width="12" height="2" fill="#c4c4c4"/></svg>
<div style="left:2022px;top:160px;width:2px;height:40px;background:#cdcdcd;"></div>
<svg style="left:2040px;top:164px;" width="32" height="32" viewBox="0 0 16 16"><g opacity="1"><path d="M0.4 13.5C0.2 8.6 2.2 4.3 7.2 4.3C10 4.3 12.2 5.2 13.6 6.5L14.2 7.9C12.6 9.2 11.5 11 11.1 13.5H8.7A0.7 0.7 0 0 0 7.3 13.5H5.1A0.7 0.7 0 0 0 3.7 13.5Z" fill="#6e6e6e"/><path d="M13.1 7.3C14.6 6.9 15.25 5.8 15.05 4.6C14.8 3.2 13.4 2.6 12.4 3.15C11.95 3.4 11.8 3.9 11.95 4.35" stroke="#6e6e6e" stroke-width="1.15" stroke-linecap="round" fill="none"/></g><path d="M3.3 6.3L5 8.4L7.3 7.1" stroke="#f2f2f2" stroke-opacity=".85" stroke-width=".45" fill="none"/><circle cx="10.6" cy="7.2" r=".38" fill="#f2f2f2" fill-opacity=".85"/></svg>
<div style="left:2088px;top:160px;width:2px;height:40px;background:#cdcdcd;"></div>
<svg style="left:2106px;top:164px;" width="32" height="32" viewBox="0 0 16 16"><rect x="2" y="1" width="12" height="2" fill="#6e6e6e"/><rect x="2" y="13" width="12" height="2" fill="#6e6e6e"/><path d="M8 4.2L11.5 7.2H4.5Z" fill="#6e6e6e"/><path d="M8 12L11.5 9H4.5Z" fill="#6e6e6e"/></svg>
<svg style="left:2158px;top:164px;" width="32" height="32" viewBox="0 0 16 16"><rect x="2" y="7" width="12" height="2" fill="#6e6e6e"/><path d="M8 5.5L11.5 2H4.5Z" fill="#6e6e6e"/><path d="M8 10.5L11.5 14H4.5Z" fill="#6e6e6e"/></svg>
<svg style="left:2210px;top:166px;" width="34" height="32" viewBox="0 0 34 32"><path d="M2 2H11.5L14 6H28V14H16V22H2Z" fill="#9aa7b0" fill-opacity=".85"/><g fill="#40b6e0"><rect x="17" y="15" width="6" height="6"/><rect x="25" y="15" width="6" height="6"/><rect x="17" y="23" width="6" height="6"/><rect x="25" y="23" width="6" height="6"/></g></svg>
<div style="left:2258px;top:160px;width:2px;height:40px;background:#cdcdcd;"></div>
<svg style="left:2277px;top:166px;" width="30" height="28" viewBox="0 0 30 28"><path d="M0 11H13M17 11H30V17H17M13 17H0Z" fill="none"/><rect x="0" y="11" width="12" height="6" fill="#6e6e6e"/><rect x="18" y="11" width="12" height="6" fill="#6e6e6e"/><path d="M13.5 1L8 27M22 1L16.5 27" stroke="#6e6e6e" stroke-width="2.6"/></svg>
<div style="left:2324px;top:160px;width:2px;height:40px;background:#cdcdcd;"></div>
<svg style="left:2344px;top:164px;" width="32" height="32" viewBox="0 0 16 16"><path d="M13.9 4.3L11.6 6.6L9.4 4.4L11.7 2.1C10.4 1.6 8.9 1.9 7.9 2.9C6.8 4 6.6 5.6 7.2 6.9L1.6 12.5C1.1 13 1.1 13.8 1.6 14.3C2.1 14.8 2.9 14.8 3.4 14.3L9 8.7C10.3 9.4 12 9.2 13.1 8.1C14.1 7.1 14.4 5.6 13.9 4.3Z" fill="#6e6e6e"/></svg>
<svg style="left:2364px;top:192px;" width="14" height="8" viewBox="0 0 14 8"><path d="M0 0H13L6.5 7Z" fill="#3c3c3c"/></svg>
<svg style="left:1863px;top:216px;" width="32" height="32" viewBox="0 0 16 16"><path d="M3.8 5.3L8 9.5L12.2 5.3" stroke="#7f7f7f" stroke-width="1.3" fill="none"/></svg>
<svg style="left:1903.7px;top:216px;" width="32" height="32" viewBox="0 0 16 16"><g opacity="0.8"><path d="M0.4 13.5C0.2 8.6 2.2 4.3 7.2 4.3C10 4.3 12.2 5.2 13.6 6.5L14.2 7.9C12.6 9.2 11.5 11 11.1 13.5H8.7A0.7 0.7 0 0 0 7.3 13.5H5.1A0.7 0.7 0 0 0 3.7 13.5Z" fill="#9aa7b0"/><path d="M13.1 7.3C14.6 6.9 15.25 5.8 15.05 4.6C14.8 3.2 13.4 2.6 12.4 3.15C11.95 3.4 11.8 3.9 11.95 4.35" stroke="#9aa7b0" stroke-width="1.15" stroke-linecap="round" fill="none"/></g><path d="M3.3 6.3L5 8.4L7.3 7.1" stroke="#fff" stroke-opacity=".85" stroke-width=".45" fill="none"/><circle cx="10.6" cy="7.2" r=".38" fill="#fff" fill-opacity=".85"/></svg>
<span id="t108" class="t" style="left:1941.70px;top:233.00px;font-family:'Liberation Sans', Arial, sans-serif;font-size:26.5px;color:#000;letter-spacing:-0.238px;">app1</span>
<svg style="left:1899px;top:256px;" width="32" height="32" viewBox="0 0 16 16"><path d="M3.8 5.3L8 9.5L12.2 5.3" stroke="#7f7f7f" stroke-width="1.3" fill="none"/></svg>
<svg style="left:1939.7px;top:256px;" width="32" height="32" viewBox="0 0 16 16"><path d="M1 2H6.6L8.6 4H15V13H1Z" fill="#9aa7b0" fill-opacity=".8"/><circle cx="12" cy="12.2" r="4.9" fill="#fff"/><rect x="8" y="13" width="8" height="3" fill="#fff"/><path d="M11.09 8.31L12.91 8.31L12.91 9.38L13.98 10.00L14.92 9.46L15.83 11.04L14.90 11.58L14.90 12.82L15.83 13.36L14.92 14.94L13.98 14.40L12.91 15.02L12.91 16.09L11.09 16.09L11.09 15.02L10.02 14.40L9.08 14.94L8.17 13.36L9.10 12.82L9.10 11.58L8.17 11.04L9.08 9.46L10.02 10.00L11.09 9.38ZM10.56 12.20a1.44 1.44 0 1 0 2.88 0a1.44 1.44 0 1 0 -2.88 0Z" fill="#40b6e0" fill-rule="evenodd"/></svg>
<span id="t109" class="t" style="left:1979.30px;top:273.00px;font-family:'Liberation Sans', Arial, sans-serif;font-size:26.5px;color:#000;letter-spacing:-0.272px;">Tasks</span>
<svg style="left:1935px;top:296px;" width="32" height="32" viewBox="0 0 16 16"><path d="M5.7 3.45L9.85 7.6L5.7 11.75" stroke="#7f7f7f" stroke-width="1.3" fill="none"/></svg>
<svg style="left:1975.7px;top:296px;" width="32" height="32" viewBox="0 0 16 16"><path d="M1 2H6.6L8.6 4H15V13H1Z" fill="#9aa7b0" fill-opacity=".8"/><circle cx="12" cy="12.2" r="4.9" fill="#fff"/><rect x="8" y="13" width="8" height="3" fill="#fff"/><path d="M11.09 8.31L12.91 8.31L12.91 9.38L13.98 10.00L14.92 9.46L15.83 11.04L14.90 11.58L14.90 12.82L15.83 13.36L14.92 14.94L13.98 14.40L12.91 15.02L12.91 16.09L11.09 16.09L11.09 15.02L10.02 14.40L9.08 14.94L8.17 13.36L9.10 12.82L9.10 11.58L8.17 11.04L9.08 9.46L10.02 10.00L11.09 9.38ZM10.56 12.20a1.44 1.44 0 1 0 2.88 0a1.44 1.44 0 1 0 -2.88 0Z" fill="#40b6e0" fill-rule="evenodd"/></svg>
<span id="t110" class="t" style="left:2014.20px;top:313.00px;font-family:'Liberation Sans', Arial, sans-serif;font-size:26.5px;color:#000;letter-spacing:1.137px;">build</span>
<svg style="left:1935px;top:336px;" width="32" height="32" viewBox="0 0 16 16"><path d="M5.7 3.45L9.85 7.6L5.7 11.75" stroke="#7f7f7f" stroke-width="1.3" fill="none"/></svg>
<svg style="left:1975.7px;top:336px;" width="32" height="32" viewBox="0 0 16 16"><path d="M1 2H6.6L8.6 4H15V13H1Z" fill="#9aa7b0" fill-opacity=".8"/><circle cx="12" cy="12.2" r="4.9" fill="#fff"/><rect x="8" y="13" width="8" height="3" fill="#fff"/><path d="M11.09 8.31L12.91 8.31L12.91 9.38L13.98 10.00L14.92 9.46L15.83 11.04L14.90 11.58L14.90 12.82L15.83 13.36L14.92 14.94L13.98 14.40L12.91 15.02L12.91 16.09L11.09 16.09L11.09 15.02L10.02 14.40L9.08 14.94L8.17 13.36L9.10 12.82L9.10 11.58L8.17 11.04L9.08 9.46L10.02 10.00L11.09 9.38ZM10.56 12.20a1.44 1.44 0 1 0 2.88 0a1.44 1.44 0 1 0 -2.88 0Z" fill="#40b6e0" fill-rule="evenodd"/></svg>
<span id="t111" class="t" style="left:2014.20px;top:353.00px;font-family:'Liberation Sans', Arial, sans-serif;font-size:26.5px;color:#000;letter-spacing:1.036px;">build setup</span>
<svg style="left:1935px;top:376px;" width="32" height="32" viewBox="0 0 16 16"><path d="M3.8 5.3L8 9.5L12.2 5.3" stroke="#7f7f7f" stroke-width="1.3" fill="none"/></svg>
<svg style="left:1975.7px;top:376px;" width="32" height="32" viewBox="0 0 16 16"><path d="M1 2H6.6L8.6 4H15V13H1Z" fill="#9aa7b0" fill-opacity=".8"/><circle cx="12" cy="12.2" r="4.9" fill="#fff"/><rect x="8" y="13" width="8" height="3" fill="#fff"/><path d="M11.09 8.31L12.91 8.31L12.91 9.38L13.98 10.00L14.92 9.46L15.83 11.04L14.90 11.58L14.90 12.82L15.83 13.36L14.92 14.94L13.98 14.40L12.91 15.02L12.91 16.09L11.09 16.09L11.09 15.02L10.02 14.40L9.08 14.94L8.17 13.36L9.10 12.82L9.10 11.58L8.17 11.04L9.08 9.46L10.02 10.00L11.09 9.38ZM10.56 12.20a1.44 1.44 0 1 0 2.88 0a1.44 1.44 0 1 0 -2.88 0Z" fill="#40b6e0" fill-rule="evenodd"/></svg>
<span id="t112" class="t" style="left:2013.60px;top:393.00px;font-family:'Liberation Sans', Arial, sans-serif;font-size:26.5px;color:#000;letter-spacing:1.010px;">compose desktop</span>
<svg style="left:2011.7px;top:416px;" width="32" height="32" viewBox="0 0 16 16"><path d="M6.49 1.57L9.51 1.57L9.51 3.36L11.27 4.37L12.81 3.48L14.32 6.09L12.78 6.98L12.78 9.02L14.32 9.91L12.81 12.52L11.27 11.63L9.51 12.64L9.51 14.43L6.49 14.43L6.49 12.64L4.73 11.63L3.19 12.52L1.68 9.91L3.22 9.02L3.22 6.98L1.68 6.09L3.19 3.48L4.73 4.37L6.49 3.36ZM5.62 8.00a2.38 2.38 0 1 0 4.75 0a2.38 2.38 0 1 0 -4.75 0Z" fill="#9aa7b0cc" fill-rule="evenodd"/></svg>
<span id="t113" class="t" style="left:2050.30px;top:433.00px;font-family:'Liberation Sans', Arial, sans-serif;font-size:26.5px;color:#000;letter-spacing:0.708px;">package</span>
<svg style="left:2011.7px;top:456px;" width="32" height="32" viewBox="0 0 16 16"><path d="M6.49 1.57L9.51 1.57L9.51 3.36L11.27 4.37L12.81 3.48L14.32 6.09L12.78 6.98L12.78 9.02L14.32 9.91L12.81 12.52L11.27 11.63L9.51 12.64L9.51 14.43L6.49 14.43L6.49 12.64L4.73 11.63L3.19 12.52L1.68 9.91L3.22 9.02L3.22 6.98L1.68 6.09L3.19 3.48L4.73 4.37L6.49 3.36ZM5.62 8.00a2.38 2.38 0 1 0 4.75 0a2.38 2.38 0 1 0 -4.75 0Z" fill="#9aa7b0cc" fill-rule="evenodd"/></svg>
<span id="t114" class="t" style="left:2050.30px;top:473.00px;font-family:'Liberation Sans', Arial, sans-serif;font-size:26.5px;color:#000;letter-spacing:0.793px;">packageDeb</span>
<svg style="left:2011.7px;top:496px;" width="32" height="32" viewBox="0 0 16 16"><path d="M6.49 1.57L9.51 1.57L9.51 3.36L11.27 4.37L12.81 3.48L14.32 6.09L12.78 6.98L12.78 9.02L14.32 9.91L12.81 12.52L11.27 11.63L9.51 12.64L9.51 14.43L6.49 14.43L6.49 12.64L4.73 11.63L3.19 12.52L1.68 9.91L3.22 9.02L3.22 6.98L1.68 6.09L3.19 3.48L4.73 4.37L6.49 3.36ZM5.62 8.00a2.38 2.38 0 1 0 4.75 0a2.38 2.38 0 1 0 -4.75 0Z" fill="#9aa7b0cc" fill-rule="evenodd"/></svg>
<span id="t115" class="t" style="left:2050.30px;top:513.00px;font-family:'Liberation Sans', Arial, sans-serif;font-size:26.5px;color:#000;letter-spacing:0.678px;">packageDmg</span>
<svg style="left:2011.7px;top:536px;" width="32" height="32" viewBox="0 0 16 16"><path d="M6.49 1.57L9.51 1.57L9.51 3.36L11.27 4.37L12.81 3.48L14.32 6.09L12.78 6.98L12.78 9.02L14.32 9.91L12.81 12.52L11.27 11.63L9.51 12.64L9.51 14.43L6.49 14.43L6.49 12.64L4.73 11.63L3.19 12.52L1.68 9.91L3.22 9.02L3.22 6.98L1.68 6.09L3.19 3.48L4.73 4.37L6.49 3.36ZM5.62 8.00a2.38 2.38 0 1 0 4.75 0a2.38 2.38 0 1 0 -4.75 0Z" fill="#9aa7b0cc" fill-rule="evenodd"/></svg>
<span id="t116" class="t" style="left:2050.30px;top:553.00px;font-family:'Liberation Sans', Arial, sans-serif;font-size:26.5px;color:#000;letter-spacing:0.798px;">packageMsi</span>
<div style="left:1856px;top:572px;width:894px;height:40px;background:#d5d5d5;"></div>
<svg style="left:2011.7px;top:576px;" width="32" height="32" viewBox="0 0 16 16"><path d="M6.49 1.57L9.51 1.57L9.51 3.36L11.27 4.37L12.81 3.48L14.32 6.09L12.78 6.98L12.78 9.02L14.32 9.91L12.81 12.52L11.27 11.63L9.51 12.64L9.51 14.43L6.49 14.43L6.49 12.64L4.73 11.63L3.19 12.52L1.68 9.91L3.22 9.02L3.22 6.98L1.68 6.09L3.19 3.48L4.73 4.37L6.49 3.36ZM5.62 8.00a2.38 2.38 0 1 0 4.75 0a2.38 2.38 0 1 0 -4.75 0Z" fill="#9aa7b0cc" fill-rule="evenodd"/></svg>
<span id="t117" class="t" style="left:2050.30px;top:593.00px;font-family:'Liberation Sans', Arial, sans-serif;font-size:26.5px;color:#000;letter-spacing:1.369px;">run</span>
<svg style="left:1935px;top:616px;" width="32" height="32" viewBox="0 0 16 16"><path d="M5.7 3.45L9.85 7.6L5.7 11.75" stroke="#7f7f7f" stroke-width="1.3" fill="none"/></svg>
<svg style="left:1975.7px;top:616px;" width="32" height="32" viewBox="0 0 16 16"><path d="M1 2H6.6L8.6 4H15V13H1Z" fill="#9aa7b0" fill-opacity=".8"/><circle cx="12" cy="12.2" r="4.9" fill="#fff"/><rect x="8" y="13" width="8" height="3" fill="#fff"/><path d="M11.09 8.31L12.91 8.31L12.91 9.38L13.98 10.00L14.92 9.46L15.83 11.04L14.90 11.58L14.90 12.82L15.83 13.36L14.92 14.94L13.98 14.40L12.91 15.02L12.91 16.09L11.09 16.09L11.09 15.02L10.02 14.40L9.08 14.94L8.17 13.36L9.10 12.82L9.10 11.58L8.17 11.04L9.08 9.46L10.02 10.00L11.09 9.38ZM10.56 12.20a1.44 1.44 0 1 0 2.88 0a1.44 1.44 0 1 0 -2.88 0Z" fill="#40b6e0" fill-rule="evenodd"/></svg>
<span id="t118" class="t" style="left:2013.60px;top:633.00px;font-family:'Liberation Sans', Arial, sans-serif;font-size:26.5px;color:#000;letter-spacing:1.041px;">documentation</span>
<svg style="left:1935px;top:656px;" width="32" height="32" viewBox="0 0 16 16"><path d="M5.7 3.45L9.85 7.6L5.7 11.75" stroke="#7f7f7f" stroke-width="1.3" fill="none"/></svg>
<svg style="left:1975.7px;top:656px;" width="32" height="32" viewBox="0 0 16 16"><path d="M1 2H6.6L8.6 4H15V13H1Z" fill="#9aa7b0" fill-opacity=".8"/><circle cx="12" cy="12.2" r="4.9" fill="#fff"/><rect x="8" y="13" width="8" height="3" fill="#fff"/><path d="M11.09 8.31L12.91 8.31L12.91 9.38L13.98 10.00L14.92 9.46L15.83 11.04L14.90 11.58L14.90 12.82L15.83 13.36L14.92 14.94L13.98 14.40L12.91 15.02L12.91 16.09L11.09 16.09L11.09 15.02L10.02 14.40L9.08 14.94L8.17 13.36L9.10 12.82L9.10 11.58L8.17 11.04L9.08 9.46L10.02 10.00L11.09 9.38ZM10.56 12.20a1.44 1.44 0 1 0 2.88 0a1.44 1.44 0 1 0 -2.88 0Z" fill="#40b6e0" fill-rule="evenodd"/></svg>
<span id="t119" class="t" style="left:2014.20px;top:673.00px;font-family:'Liberation Sans', Arial, sans-serif;font-size:26.5px;color:#000;letter-spacing:0.945px;">help</span>
<svg style="left:1935px;top:696px;" width="32" height="32" viewBox="0 0 16 16"><path d="M5.7 3.45L9.85 7.6L5.7 11.75" stroke="#7f7f7f" stroke-width="1.3" fill="none"/></svg>
<svg style="left:1975.7px;top:696px;" width="32" height="32" viewBox="0 0 16 16"><path d="M1 2H6.6L8.6 4H15V13H1Z" fill="#9aa7b0" fill-opacity=".8"/><circle cx="12" cy="12.2" r="4.9" fill="#fff"/><rect x="8" y="13" width="8" height="3" fill="#fff"/><path d="M11.09 8.31L12.91 8.31L12.91 9.38L13.98 10.00L14.92 9.46L15.83 11.04L14.90 11.58L14.90 12.82L15.83 13.36L14.92 14.94L13.98 14.40L12.91 15.02L12.91 16.09L11.09 16.09L11.09 15.02L10.02 14.40L9.08 14.94L8.17 13.36L9.10 12.82L9.10 11.58L8.17 11.04L9.08 9.46L10.02 10.00L11.09 9.38ZM10.56 12.20a1.44 1.44 0 1 0 2.88 0a1.44 1.44 0 1 0 -2.88 0Z" fill="#40b6e0" fill-rule="evenodd"/></svg>
<span id="t120" class="t" style="left:2013.60px;top:713.00px;font-family:'Liberation Sans', Arial, sans-serif;font-size:26.5px;color:#000;letter-spacing:1.281px;">other</span>
<svg style="left:1935px;top:736px;" width="32" height="32" viewBox="0 0 16 16"><path d="M5.7 3.45L9.85 7.6L5.7 11.75" stroke="#7f7f7f" stroke-width="1.3" fill="none"/></svg>
<svg style="left:1975.7px;top:736px;" width="32" height="32" viewBox="0 0 16 16"><path d="M1 2H6.6L8.6 4H15V13H1Z" fill="#9aa7b0" fill-opacity=".8"/><circle cx="12" cy="12.2" r="4.9" fill="#fff"/><rect x="8" y="13" width="8" height="3" fill="#fff"/><path d="M11.09 8.31L12.91 8.31L12.91 9.38L13.98 10.00L14.92 9.46L15.83 11.04L14.90 11.58L14.90 12.82L15.83 13.36L14.92 14.94L13.98 14.40L12.91 15.02L12.91 16.09L11.09 16.09L11.09 15.02L10.02 14.40L9.08 14.94L8.17 13.36L9.10 12.82L9.10 11.58L8.17 11.04L9.08 9.46L10.02 10.00L11.09 9.38ZM10.56 12.20a1.44 1.44 0 1 0 2.88 0a1.44 1.44 0 1 0 -2.88 0Z" fill="#40b6e0" fill-rule="evenodd"/></svg>
<span id="t121" class="t" style="left:2014.60px;top:753.00px;font-family:'Liberation Sans', Arial, sans-serif;font-size:26.5px;color:#000;letter-spacing:1.043px;">verification</span>
<svg style="left:1899px;top:776px;" width="32" height="32" viewBox="0 0 16 16"><path d="M5.7 3.45L9.85 7.6L5.7 11.75" stroke="#7f7f7f" stroke-width="1.3" fill="none"/></svg>
<svg style="left:1939.7px;top:776px;" width="32" height="32" viewBox="0 0 16 16"><path d="M1 2H6.6L8.6 4H15V7H7V13H1Z" fill="#9aa7b0" fill-opacity=".8"/><rect x="8" y="9" width="2" height="6" fill="#62b543"/><rect x="11" y="7.5" width="2" height="7.5" fill="#9aa7b0" fill-opacity=".8"/><rect x="14" y="9" width="2" height="6" fill="#40b6e0"/></svg>
<span id="t122" class="t" style="left:1977.50px;top:793.00px;font-family:'Liberation Sans', Arial, sans-serif;font-size:26.5px;color:#000;letter-spacing:0.793px;">Dependencies</span>
<div style="left:2750px;top:98px;width:42px;height:1804px;background:#f2f2f2;"></div>
<div style="left:2750px;top:98px;width:2px;height:1804px;background:#d1d1d1;"></div>
<div style="left:2750px;top:98px;width:42px;height:138px;background:#bdbdbd;"></div>
<svg style="left:2757.3px;top:114.4px;" width="27.5" height="27.5" viewBox="0 0 16 16"><g opacity="1"><path d="M0.4 13.5C0.2 8.6 2.2 4.3 7.2 4.3C10 4.3 12.2 5.2 13.6 6.5L14.2 7.9C12.6 9.2 11.5 11 11.1 13.5H8.7A0.7 0.7 0 0 0 7.3 13.5H5.1A0.7 0.7 0 0 0 3.7 13.5Z" fill="#6e6e6e"/><path d="M13.1 7.3C14.6 6.9 15.25 5.8 15.05 4.6C14.8 3.2 13.4 2.6 12.4 3.15C11.95 3.4 11.8 3.9 11.95 4.35" stroke="#6e6e6e" stroke-width="1.15" stroke-linecap="round" fill="none"/></g><path d="M3.3 6.3L5 8.4L7.3 7.1" stroke="#bdbdbd" stroke-opacity=".85" stroke-width=".45" fill="none"/><circle cx="10.6" cy="7.2" r=".38" fill="#bdbdbd" fill-opacity=".85"/></svg>
<span id="t123" class="t" style="left:2762.20px;top:144.00px;font-family:'Liberation Sans', Arial, sans-serif;font-size:22px;color:#000;letter-spacing:-0.059px;transform-origin:1.00px 7.50px;transform:rotate(90deg);">Gradle</span>
<svg style="left:2758px;top:257px;" width="26" height="26" viewBox="0 0 26 26"><g fill="#6e6e6e"><ellipse cx="13" cy="5.500" rx="11" ry="3.800"/><path d="M2 8.800C2 13.300 24 13.300 24 8.800V11.500C24 16 2 16 2 11.500Z"/><path d="M2 14.300C2 18.800 24 18.800 24 14.300V17C24 21.500 2 21.500 2 17Z"/><path d="M2 19.800C2 24.300 24 24.300 24 19.800V21C24 26 2 26 2 21Z"/></g></svg>
<span id="t124" class="t" style="left:2762.20px;top:286.50px;font-family:'Liberation Sans', Arial, sans-serif;font-size:22px;color:#000;letter-spacing:-0.177px;transform-origin:1.00px 7.50px;transform:rotate(90deg);">Database</span>
<div style="left:34px;top:1306px;width:2716px;height:2px;background:#d1d1d1;"></div>
<div style="left:34px;top:1308px;width:2716px;height:52px;background:#f2f2f2;"></div>
<div style="left:34px;top:1360px;width:2716px;height:2px;background:#d1d1d1;"></div>
<span id="t125" class="t" style="left:45.30px;top:1335.50px;font-family:'Liberation Sans', Arial, sans-serif;font-size:24.5px;color:#000;letter-spacing:0.185px;">Run:</span>
<div style="left:112px;top:1356px;width:232px;height:6px;background:#a3aec2;"></div>
<svg style="left:136.5px;top:1318.8px;" width="32" height="32" viewBox="0 0 16 16"><g opacity="0.55"><path d="M0.4 13.5C0.2 8.6 2.2 4.3 7.2 4.3C10 4.3 12.2 5.2 13.6 6.5L14.2 7.9C12.6 9.2 11.5 11 11.1 13.5H8.7A0.7 0.7 0 0 0 7.3 13.5H5.1A0.7 0.7 0 0 0 3.7 13.5Z" fill="#9aa7b0"/><path d="M13.1 7.3C14.6 6.9 15.25 5.8 15.05 4.6C14.8 3.2 13.4 2.6 12.4 3.15C11.95 3.4 11.8 3.9 11.95 4.35" stroke="#9aa7b0" stroke-width="1.15" stroke-linecap="round" fill="none"/></g><path d="M3.3 6.3L5 8.4L7.3 7.1" stroke="#f2f2f2" stroke-opacity=".85" stroke-width=".45" fill="none"/><circle cx="10.6" cy="7.2" r=".38" fill="#f2f2f2" fill-opacity=".85"/></svg>
<span id="t126" class="t" style="left:175.80px;top:1335.50px;font-family:'Liberation Sans', Arial, sans-serif;font-size:24.5px;color:#000;letter-spacing:0.475px;">app1 [run]</span>
<svg style="left:306px;top:1328px;" width="16" height="16" viewBox="0 0 16 16"><path d="M1 1L15 15M15 1L1 15" stroke="#b4b4b4" stroke-width="2" fill="none"/></svg>
<svg style="left:2656px;top:1318px;" width="32" height="32" viewBox="0 0 16 16"><path d="M6.88 1.80L9.12 1.80L9.28 3.42L11.32 4.61L12.81 3.93L13.93 5.87L12.60 6.82L12.60 9.18L13.93 10.13L12.81 12.07L11.32 11.39L9.28 12.58L9.12 14.20L6.88 14.20L6.72 12.58L4.68 11.39L3.19 12.07L2.07 10.13L3.40 9.18L3.40 6.82L2.07 5.87L3.19 3.93L4.68 4.61L6.72 3.42ZM5.55 8a2.45 2.45 0 1 0 4.9 0a2.45 2.45 0 1 0 -4.9 0Z" fill="#6e6e6e" fill-rule="evenodd" stroke="#6e6e6e" stroke-width=".5" stroke-linejoin="round"/></svg>
<svg style="left:2708px;top:1318px;" width="32" height="32" viewBox="0 0 16 16"><rect x="2" y="7" width="12" height="2" fill="#6e6e6e"/></svg>
<div style="left:34px;top:1362px;width:56px;height:538px;background:#f2f2f2;"></div>
<div style="left:90px;top:1362px;width:2px;height:538px;background:#d1d1d1;"></div>
<svg style="left:54px;top:1378px;" width="21" height="24" viewBox="0 0 21 24"><path d="M0 0L20 12L0 24Z" fill="#59a869"/></svg>
<svg style="left:46px;top:1426px;" width="32" height="32" viewBox="0 0 16 16"><path d="M13.9 4.3L11.6 6.6L9.4 4.4L11.7 2.1C10.4 1.6 8.9 1.9 7.9 2.9C6.8 4 6.6 5.6 7.2 6.9L1.6 12.5C1.1 13 1.1 13.8 1.6 14.3C2.1 14.8 2.9 14.8 3.4 14.3L9 8.7C10.3 9.4 12 9.2 13.1 8.1C14.1 7.1 14.4 5.6 13.9 4.3Z" fill="#6e6e6e"/></svg>
<div style="left:42px;top:1474px;width:40px;height:2px;background:#d4d4d4;"></div>
<div style="left:52px;top:1498px;width:20px;height:20px;background:#c4c4c4;"></div>
<div style="left:42px;top:1540px;width:40px;height:2px;background:#d4d4d4;"></div>
<svg style="left:47px;top:1561px;" width="36" height="32" viewBox="0 0 36 32"><path d="M0.500 13C4.500 5.500 10.500 2.500 15.500 2.500S26.500 5.500 30.500 13C26.500 20.500 20.500 23.500 15.500 23.500S4.500 20.500 0.500 13Z" fill="#6e6e6e"/><circle cx="15.500" cy="13" r="6.800" fill="#f2f2f2"/><circle cx="15.500" cy="13" r="3.400" fill="#6e6e6e"/><path d="M22.500 25H33L27.700 31Z" fill="#3c3c3c"/></svg>
<div style="left:42px;top:1606px;width:40px;height:2px;background:#d4d4d4;"></div>
<svg style="left:50px;top:1630px;" width="24" height="22" viewBox="0 0 24 22"><rect x="0" y="0" width="14" height="9" fill="#6e6e6e"/><rect x="16" y="0" width="8" height="9" fill="#6e6e6e"/><rect x="0" y="11" width="24" height="9.500" fill="#6e6e6e"/></svg>
<div style="left:42px;top:1672px;width:40px;height:2px;background:#d4d4d4;"></div>
<svg style="left:46px;top:1690px;" width="32" height="32" viewBox="0 0 32 32"><path d="M18 2L30 14L27.500 16.500L25 15.500L19.500 21L20 26L17.500 28.500L11 22L2 31L1 30L10 21L3.500 14.500L6 12L11 12.500L16.500 7L15.500 4.500Z" fill="#6e6e6e"/></svg>
<div style="left:92px;top:1362px;width:876px;height:538px;background:#fff;"></div>
<div style="left:968px;top:1362px;width:2px;height:538px;background:#d1d1d1;"></div>
<svg style="left:144px;top:1374px;" width="26" height="20" viewBox="0 0 26 20"><path d="M2 10L9.5 17.5L24 3" stroke="#7fc97a" stroke-width="4.4" fill="none"/></svg>
<span id="t127" class="t" style="left:178.90px;top:1384.00px;font-family:'Liberation Sans', Arial, sans-serif;font-size:26.5px;color:#000;letter-spacing:0.755px;font-weight:700;-webkit-text-stroke:0;">app1 [run]:</span>
<span id="t128" class="t" style="left:331.70px;top:1384.00px;font-family:'Liberation Sans', Arial, sans-serif;font-size:26.5px;color:#000;letter-spacing:0.941px;">successful</span>
<span id="t129" class="t" style="left:473.00px;top:1384.00px;font-family:'Liberation Sans', Arial, sans-serif;font-size:26.5px;color:#808080;letter-spacing:0.402px;">At 30.11.2020, 10:54</span>
<span id="t130" class="t" style="left:795.40px;top:1384.50px;font-family:'Liberation Sans', Arial, sans-serif;font-size:24.5px;color:#8c8c8c;letter-spacing:-0.130px;">13 sec, 175 ms</span>
<div style="left:970px;top:1362px;width:1724px;height:538px;background:#fff;"></div>
<div style="left:2694px;top:1362px;width:56px;height:538px;background:#f2f2f2;"></div>
<span id="t131" class="t" style="left:994.00px;top:1374.50px;font-family:'DejaVu Sans Mono', 'Liberation Mono', monospace;font-size:26.5px;color:#080808;letter-spacing:0.047px;">1 actionable task: 1 executed</span>
<span id="t132" class="t" style="left:994.00px;top:1416.50px;font-family:'DejaVu Sans Mono', 'Liberation Mono', monospace;font-size:26.5px;color:#080808;letter-spacing:0.047px;">&gt; Task :compileKotlin</span>
<span id="t133" class="t" style="left:994.00px;top:1458.50px;font-family:'DejaVu Sans Mono', 'Liberation Mono', monospace;font-size:26.5px;color:#080808;letter-spacing:0.047px;">&gt; Task :compileJava NO-SOURCE</span>
<span id="t134" class="t" style="left:994.00px;top:1500.50px;font-family:'DejaVu Sans Mono', 'Liberation Mono', monospace;font-size:26.5px;color:#080808;letter-spacing:0.047px;">&gt; Task :processResources NO-SOURCE</span>
<span id="t135" class="t" style="left:994.00px;top:1542.50px;font-family:'DejaVu Sans Mono', 'Liberation Mono', monospace;font-size:26.5px;color:#080808;letter-spacing:0.047px;">&gt; Task :classes UP-TO-DATE</span>
<span id="t136" class="t" style="left:994.00px;top:1584.50px;font-family:'DejaVu Sans Mono', 'Liberation Mono', monospace;font-size:26.5px;color:#080808;letter-spacing:0.047px;">&gt; Task :inspectClassesForKotlinIC</span>
<span id="t137" class="t" style="left:994.00px;top:1626.50px;font-family:'DejaVu Sans Mono', 'Liberation Mono', monospace;font-size:26.5px;color:#080808;letter-spacing:0.047px;">&gt; Task :jar</span>
<span id="t138" class="t" style="left:994.00px;top:1668.50px;font-family:'DejaVu Sans Mono', 'Liberation Mono', monospace;font-size:26.5px;color:#080808;letter-spacing:0.047px;">&gt; Task :run</span>
<span id="t139" class="t" style="left:994.00px;top:1752.50px;font-family:'DejaVu Sans Mono', 'Liberation Mono', monospace;font-size:26.5px;color:#080808;letter-spacing:0.047px;">BUILD SUCCESSFUL in 12s</span>
<span id="t140" class="t" style="left:994.00px;top:1794.50px;font-family:'DejaVu Sans Mono', 'Liberation Mono', monospace;font-size:26.5px;color:#080808;letter-spacing:0.047px;">4 actionable tasks: 4 executed</span>
<span id="t141" class="t" style="left:994.00px;top:1836.50px;font-family:'DejaVu Sans Mono', 'Liberation Mono', monospace;font-size:26.5px;color:#000080;letter-spacing:0.047px;">10:54:06: Task execution finished &#x27;run&#x27;.</span>
<svg style="left:2708px;top:1378px;" width="30" height="30" viewBox="0 0 30 30"><rect x="2" y="2" width="24" height="4" fill="#6e6e6e"/><path d="M2 14.300H20.500A4.800 4.800 0 0 1 20.500 23.900H17" stroke="#6e6e6e" stroke-width="3.800" fill="none"/><path d="M12.400 23.800L17.900 18.200V29.500Z" fill="#6e6e6e"/><rect x="2" y="22" width="6" height="3.900" fill="#6e6e6e"/></svg>
<div style="left:2700px;top:1422px;width:44px;height:44px;background:#cfcfcf;border-radius:6px;"></div>
<svg style="left:2709px;top:1430px;" width="28" height="26" viewBox="0 0 28 26"><g fill="#6e6e6e"><rect x="1" y="4.100" width="8" height="3.900"/><rect x="1" y="12.100" width="8" height="3.900"/><rect x="1" y="20" width="24" height="4.100"/><rect x="17.300" y="0" width="3.500" height="11.400"/><path d="M11.700 10.600H26.600L19.100 18Z"/></g></svg>
<div style="left:0px;top:1900px;width:2792px;height:2px;background:#d1d1d1;"></div>
<div style="left:0px;top:1902px;width:2792px;height:40px;background:#f2f2f2;"></div>
<div style="left:0px;top:1942px;width:2792px;height:2px;background:#d1d1d1;"></div>
<div style="left:132px;top:1902px;width:110px;height:40px;background:#bdbdbd;"></div>
<svg style="left:54px;top:1912px;" width="22" height="22" viewBox="0 0 22 22"><rect x="0" y="0" width="4" height="22" fill="#6e6e6e"/><path d="M4 12.800H12.700V7.900H8.500L14.600 0.100L20.800 7.900H16.200V17H4Z" fill="#6e6e6e"/></svg>
<span id="t142" class="t" style="left:83.90px;top:1922.50px;font-family:'Liberation Sans', Arial, sans-serif;font-size:22.5px;color:#000;letter-spacing:-0.550px;">Git</span>
<svg style="left:156px;top:1913px;" width="17" height="20" viewBox="0 0 17 20"><path d="M0 0L16.5 10L0 20Z" fill="#6e6e6e"/></svg>
<span id="t143" class="t" style="left:186.10px;top:1922.50px;font-family:'Liberation Sans', Arial, sans-serif;font-size:22.5px;color:#000;letter-spacing:-0.881px;">Run</span>
<svg style="left:266px;top:1914px;" width="21" height="17" viewBox="0 0 21 17"><g fill="#6e6e6e"><rect x="0" y="0" width="4" height="3.5"/><rect x="6" y="0" width="15" height="3.5"/><rect x="0" y="6.5" width="4" height="3.5"/><rect x="6" y="6.5" width="15" height="3.5"/><rect x="0" y="13" width="4" height="3.5"/><rect x="6" y="13" width="15" height="3.5"/></g></svg>
<span id="t144" class="t" style="left:297.00px;top:1922.50px;font-family:'Liberation Sans', Arial, sans-serif;font-size:22.5px;color:#000;letter-spacing:-1.362px;">TODO</span>
<svg style="left:401px;top:1912px;" width="21" height="21" viewBox="0 0 21 21"><circle cx="10.5" cy="10.5" r="10.2" fill="#6e6e6e"/><rect x="9" y="4.500" width="3" height="8" fill="#f2f2f2"/><rect x="9" y="14" width="3" height="3" fill="#f2f2f2"/></svg>
<span id="t145" class="t" style="left:432.00px;top:1922.50px;font-family:'Liberation Sans', Arial, sans-serif;font-size:22.5px;color:#000;letter-spacing:-0.040px;">Problems</span>
<svg style="left:572px;top:1912px;" width="22" height="20" viewBox="0 0 22 20"><rect x="0" y="0" width="22" height="20" fill="#6e6e6e"/><path d="M3.500 4.500L8.500 9L3.500 13.500" stroke="#f2f2f2" stroke-width="2.200" fill="none"/><rect x="10" y="13.500" width="8" height="2.400" fill="#f2f2f2"/></svg>
<span id="t146" class="t" style="left:604.80px;top:1922.50px;font-family:'Liberation Sans', Arial, sans-serif;font-size:22.5px;color:#000;letter-spacing:-0.003px;">Terminal</span>
<svg style="left:731px;top:1910px;" width="27" height="27" viewBox="0 0 27 27"><path d="M12 2.200A9.500 9.500 0 1 0 12.500 21" stroke="#8a8a8a" stroke-width="2.200" fill="none"/><path d="M12 2.200A9.500 9.500 0 0 1 21.200 9.500" stroke="#8a8a8a" stroke-width="2.200" fill="none"/><path d="M11.500 6V12.200L14.500 14.500" stroke="#8a8a8a" stroke-width="2" fill="none"/><path d="M15 12L26 19.500L15 27Z" fill="#6e6e6e"/></svg>
<span id="t147" class="t" style="left:766.00px;top:1922.50px;font-family:'Liberation Sans', Arial, sans-serif;font-size:22.5px;color:#000;letter-spacing:0.175px;">Profiler</span>
<svg style="left:875.5px;top:1909.5px;" width="27.2" height="25.6" viewBox="0 0 34 32"><path d="M2 13.2L12.9 2H20V3.5L14 8.5L19.9 14.2L22 15.100L32.200 25.100L27.400 30L16.900 19.400L17.200 17.500L10.500 11.700L6.300 17.100Z" fill="#6e6e6e"/></svg>
<div style="left:893.5px;top:1927.7px;width:9.4px;height:9.4px;background:#2fc639;border-radius:5px;"></div>
<span id="t148" class="t" style="left:909.50px;top:1922.50px;font-family:'Liberation Sans', Arial, sans-serif;font-size:22.5px;color:#000;letter-spacing:0.145px;">Build</span>
<svg style="left:2595px;top:1910px;" width="28" height="28" viewBox="0 0 28 28"><path d="M14 2.500A11.500 11.500 0 1 0 14 25.500H25.500V14A11.500 11.500 0 0 0 14 2.500Z" stroke="#6e6e6e" stroke-width="2.400" fill="none"/></svg>
<span id="t149" class="t" style="left:2630.40px;top:1922.50px;font-family:'Liberation Sans', Arial, sans-serif;font-size:22.5px;color:#000;letter-spacing:-0.239px;">Event Log</span>
<div style="left:0px;top:1944px;width:2792px;height:40px;background:#f2f2f2;border-radius:0 0 22px 22px;"></div>
<svg style="left:4px;top:1952px;" width="26" height="26" viewBox="0 0 26 26"><rect x="5" y="1" width="19" height="19" stroke="#6e6e6e" stroke-width="1.800" fill="none"/><path d="M1.500 5V24H20.500" stroke="#6e6e6e" stroke-width="1.800" fill="none"/></svg>
<span id="t150" class="t" style="left:1638.00px;top:1964.00px;font-family:'Liberation Sans', Arial, sans-serif;font-size:23px;color:#000;letter-spacing:-0.132px;">Gradle: Build model...</span>
<div style="left:1870px;top:1959px;width:292px;height:10px;background:#3d8fe8;border-radius:5px;background:linear-gradient(90deg,#3d8fe8 0%,#5da5ec 25%,#a3cdf4 42%,#5da5ec 60%,#3585e4 100%);"></div>
<svg style="left:2173px;top:1951px;" width="26" height="26" viewBox="0 0 26 26"><circle cx="13" cy="13" r="12.500" fill="#c4c4c4"/><path d="M8 8L18 18M18 8L8 18" stroke="#f2f2f2" stroke-width="2.200"/></svg>
<span id="t151" class="t" style="left:2222.30px;top:1964.00px;font-family:'Liberation Sans', Arial, sans-serif;font-size:23px;color:#000;letter-spacing:-1.500px;">LF</span>
<span id="t152" class="t" style="left:2270.30px;top:1964.00px;font-family:'Liberation Sans', Arial, sans-serif;font-size:23px;color:#000;letter-spacing:0.058px;">UTF-8</span>
<span id="t153" class="t" style="left:2361.20px;top:1964.00px;font-family:'Liberation Sans', Arial, sans-serif;font-size:23px;color:#000;letter-spacing:-0.165px;">4 spaces</span>
<svg style="left:2479px;top:1950px;" width="20" height="28" viewBox="0 0 20 28"><g stroke="#6e6e6e" stroke-width="3.400" fill="none"><path d="M4 3V25"/><path d="M17 5V8C17 14 4 13 4 19"/></g><circle cx="4" cy="3.500" r="3.500" fill="#6e6e6e"/><circle cx="17" cy="5" r="3.500" fill="#6e6e6e"/><circle cx="4" cy="24.500" r="3.500" fill="#6e6e6e"/></svg>
<span id="t154" class="t" style="left:2510.80px;top:1964.00px;font-family:'Liberation Sans', Arial, sans-serif;font-size:23px;color:#000;letter-spacing:-0.077px;">version_updater</span>
<svg style="left:2692px;top:1950px;" width="26" height="26" viewBox="0 0 26 26"><rect x="7" y="12" width="17" height="13" fill="#6e6e6e"/><path d="M3 13V8A5 5 0 0 1 13 8V12" stroke="#6e6e6e" stroke-width="2.600" fill="none"/></svg>
<svg style="left:2738px;top:1948px;" width="36" height="34" viewBox="0 0 36 34"><g fill="#6e6e6e"><circle cx="16.300" cy="10.900" r="8.700"/><circle cx="7.600" cy="15.800" r="5.800"/><circle cx="25.800" cy="16.200" r="6.100"/><rect x="7.600" y="14" width="18.200" height="9.300"/></g><circle cx="27.200" cy="25.500" r="8.200" fill="#f2f2f2"/><text x="16.600" y="17.200" text-anchor="middle" font-family="Liberation Sans, sans-serif" font-size="17" font-weight="700" fill="#f2f2f2">?</text><g transform="translate(20.700,19)"><path d="M5.06 0.37L7.94 0.37L7.94 2.07L9.62 3.04L11.09 2.19L12.53 4.68L11.06 5.53L11.06 7.47L12.53 8.32L11.09 10.81L9.62 9.96L7.94 10.93L7.94 12.63L5.06 12.63L5.06 10.93L3.38 9.96L1.91 10.81L0.47 8.32L1.94 7.47L1.94 5.53L0.47 4.68L1.91 2.19L3.38 3.04L5.06 2.07ZM4.23 6.50a2.27 2.27 0 1 0 4.54 0a2.27 2.27 0 1 0 -4.54 0Z" fill="#6e6e6e" fill-rule="evenodd"/></g></svg>
</div></body></html>
